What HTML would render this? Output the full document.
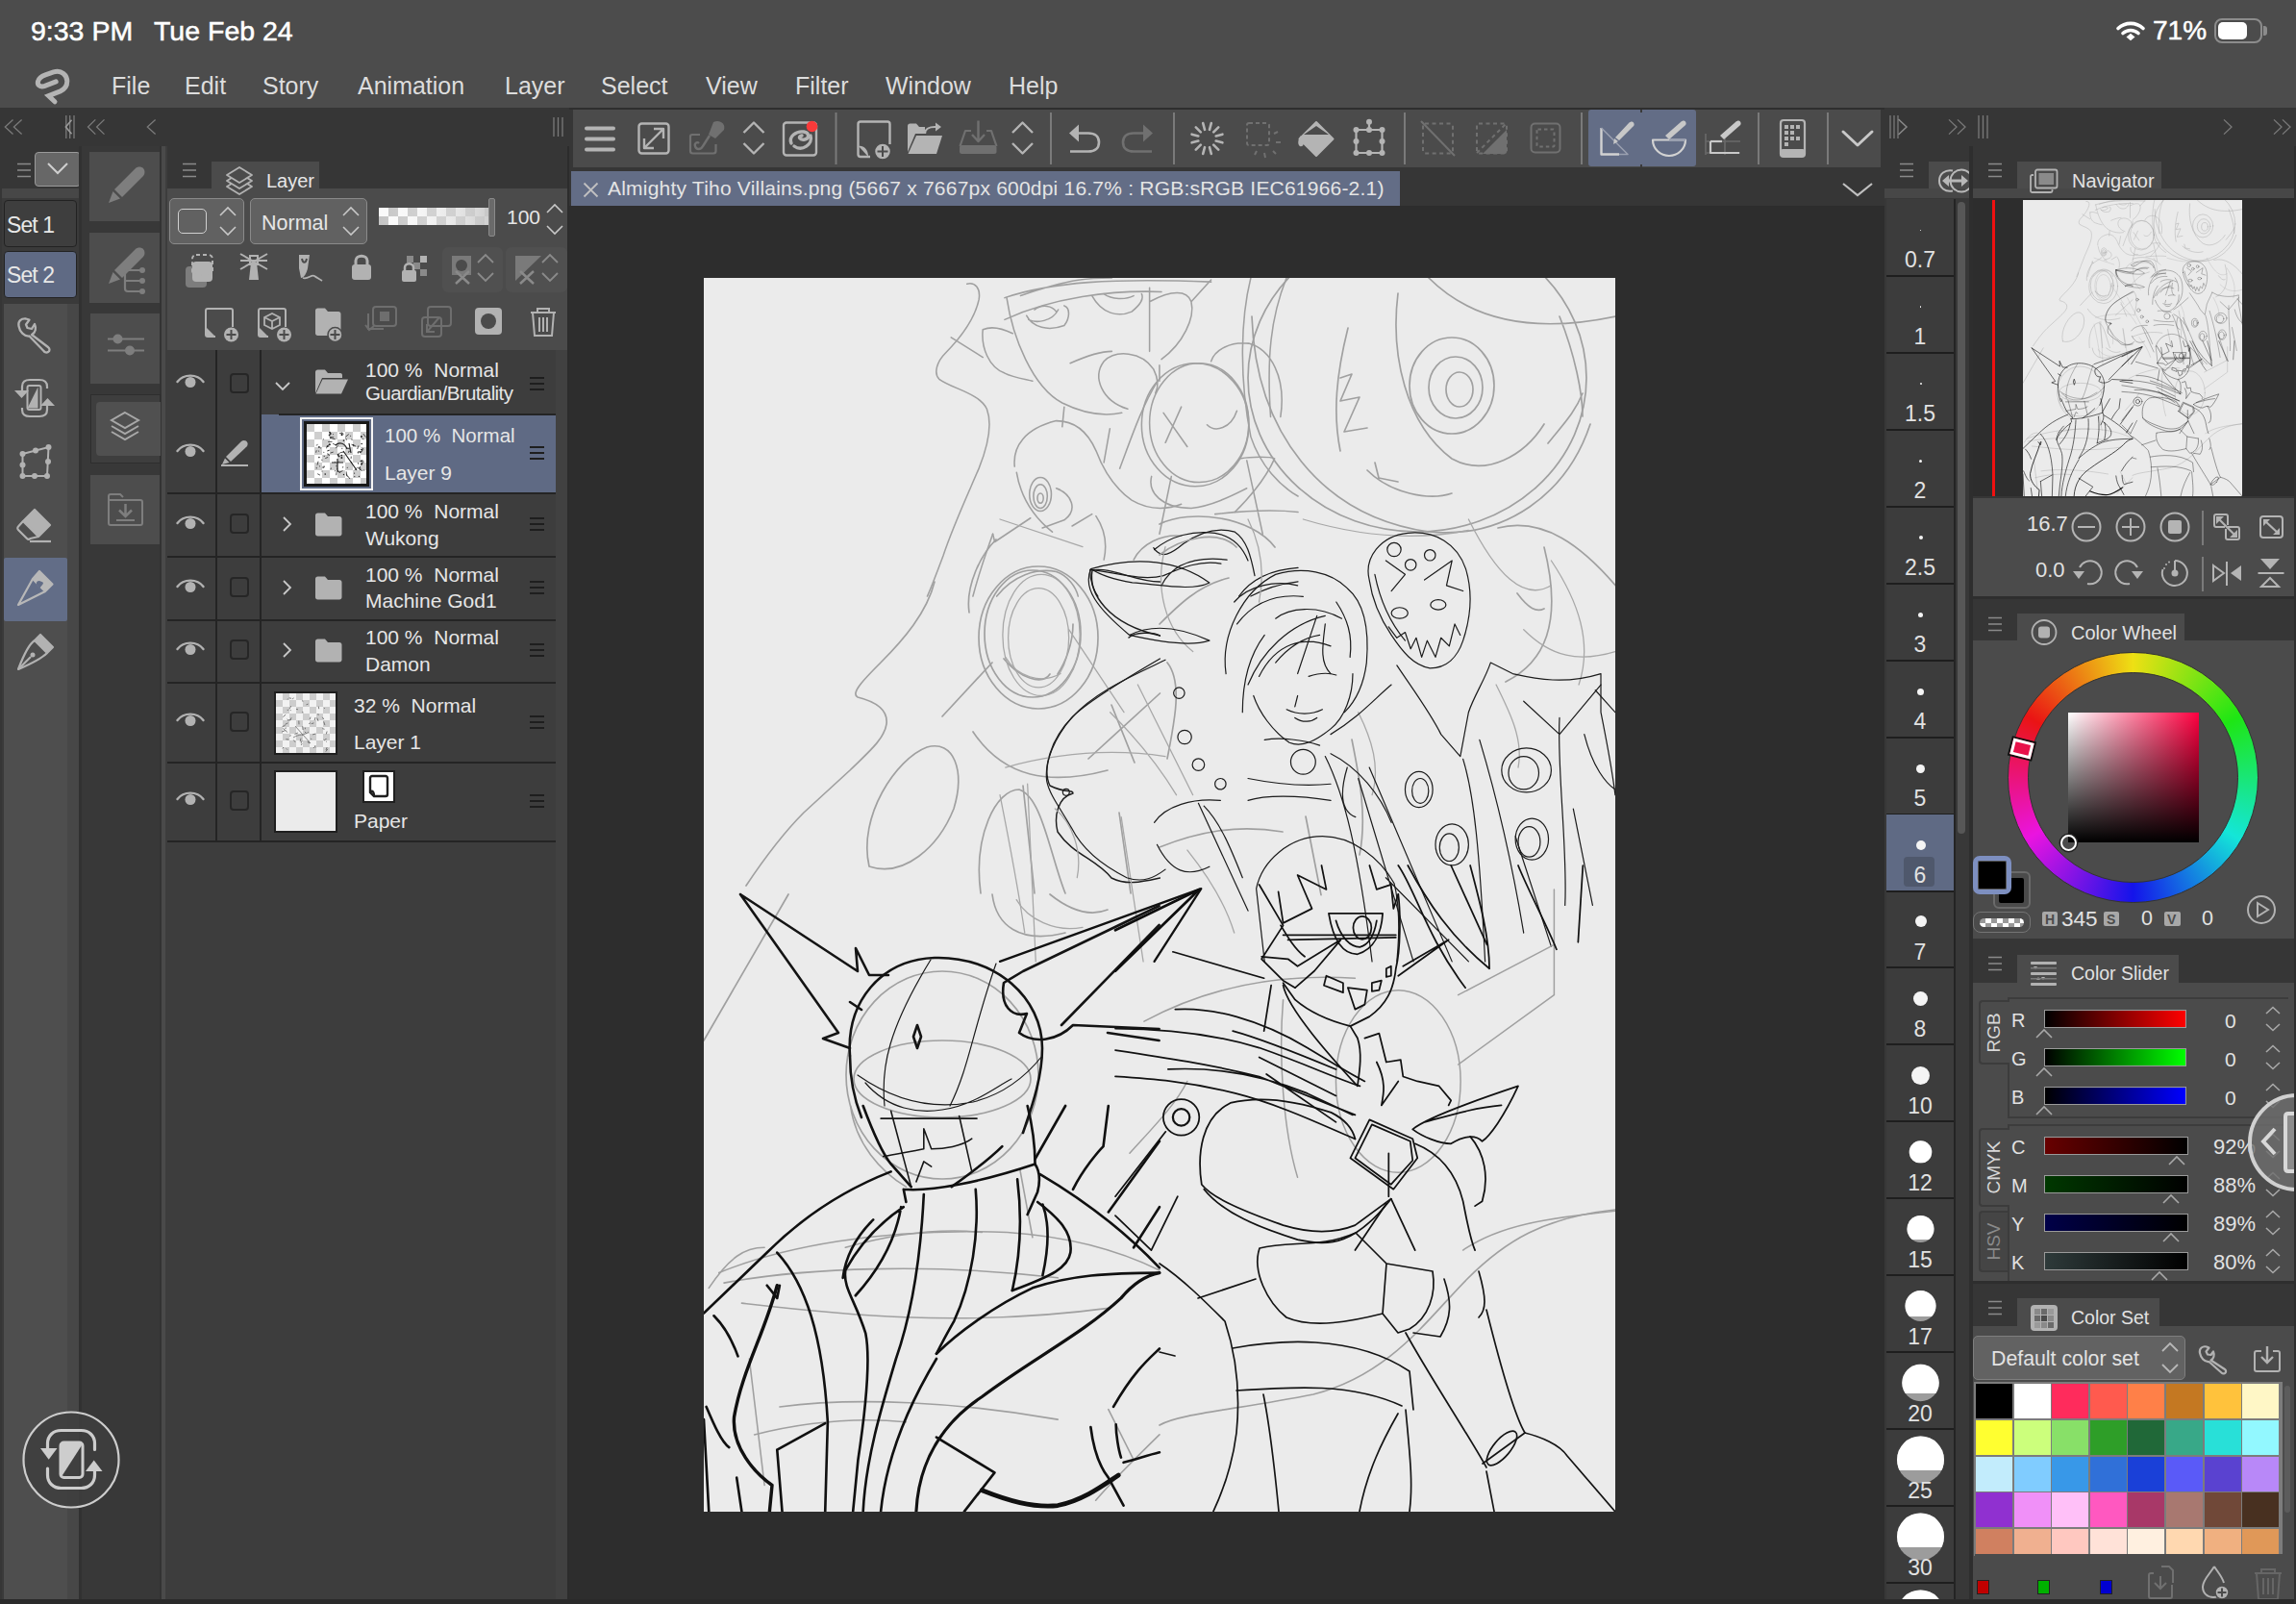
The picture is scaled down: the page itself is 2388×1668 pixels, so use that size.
<!DOCTYPE html>
<html><head><meta charset="utf-8">
<style>
*{box-sizing:border-box;margin:0;padding:0}
html,body{width:2388px;height:1668px;overflow:hidden;background:#4b4b4b;font-family:"Liberation Sans",sans-serif;color:#e6e6e6}
.a{position:absolute}
.t{position:absolute;white-space:nowrap;line-height:1}
svg{position:absolute;overflow:visible}
</style></head><body>
<div class="a" style="left:0;top:0;width:2388px;height:1668px">

<!-- status bar + menu -->
<div class="a" style="left:0;top:0;width:2388px;height:112px;background:#4c4c4c"></div>
<div class="t" style="left:32px;top:18px;font-size:28.5px;color:#fff;-webkit-text-stroke:0.5px #fff">9:33 PM</div>
<div class="t" style="left:160px;top:18px;font-size:28.5px;color:#fff;-webkit-text-stroke:0.5px #fff">Tue Feb 24</div>
<svg class="a" style="left:2200px;top:20px" width="32" height="24" viewBox="0 0 32 24">
<path d="M3,9.5 A19,19 0 0 1 29,9.5" fill="none" stroke="#fff" stroke-width="3.6" stroke-linecap="round"/>
<path d="M8,14.5 A12,12 0 0 1 24,14.5" fill="none" stroke="#fff" stroke-width="3.6" stroke-linecap="round"/>
<path d="M11.5,18.5 L16,14.8 L20.5,18.5 L16,22.3 Z" fill="#fff"/>
</svg>
<div class="t" style="left:2239px;top:18px;font-size:28px;color:#fff;-webkit-text-stroke:0.5px #fff">71%</div>
<div class="a" style="left:2303px;top:19px;width:50px;height:26px;border:2.5px solid #8c8c8c;border-radius:8px"></div>
<div class="a" style="left:2307px;top:23px;width:30px;height:18px;background:#fff;border-radius:5px"></div>
<div class="a" style="left:2354px;top:27px;width:4px;height:10px;background:#8c8c8c;border-radius:0 3px 3px 0"></div>

<svg class="a" style="left:0;top:0" width="100" height="112">
<path transform="translate(1.2,2.6)" d="M57,82.3 L45.5,86.8 C40.5,88.6 37.3,85.8 38.3,82 C39.2,78.8 42,76.8 46,75.3 L54.5,72.3 C63,69.8 68.6,75.6 68.6,82 C68.6,87 66,90.3 61.5,92.3 L49.3,97 L55.8,103.2" fill="none" stroke="#b4b4b4" stroke-width="5" stroke-linecap="round" stroke-linejoin="miter"/>
</svg>
<div class="t" style="left:116px;top:77px;font-size:25px;color:#ddd">File</div>
<div class="t" style="left:192px;top:77px;font-size:25px;color:#ddd">Edit</div>
<div class="t" style="left:273px;top:77px;font-size:25px;color:#ddd">Story</div>
<div class="t" style="left:372px;top:77px;font-size:25px;color:#ddd">Animation</div>
<div class="t" style="left:525px;top:77px;font-size:25px;color:#ddd">Layer</div>
<div class="t" style="left:625px;top:77px;font-size:25px;color:#ddd">Select</div>
<div class="t" style="left:734px;top:77px;font-size:25px;color:#ddd">View</div>
<div class="t" style="left:827px;top:77px;font-size:25px;color:#ddd">Filter</div>
<div class="t" style="left:921px;top:77px;font-size:25px;color:#ddd">Window</div>
<div class="t" style="left:1049px;top:77px;font-size:25px;color:#ddd">Help</div>

<!-- dark strip -->
<div class="a" style="left:0;top:112px;width:2388px;height:1556px;background:#363636"></div>

<!-- left tools column -->
<svg class="a" style="left:0;top:112px" width="600" height="40" viewBox="0 0 600 40" fill="none" stroke="#7a7a7a" stroke-width="1.3">
<path d="M13.5,12.4 L5.3,20 L13.5,27.6 M22.6,12.4 L14.4,20 L22.6,27.6"/>
<path d="M68.8,8 V32 M72.7,8 V32 M77,8 V32"/>
<path d="M74.5,12.8 L68.4,20 L74.5,27.2" stroke="#9a9a9a" stroke-width="1.6"/>
<path d="M99.3,12.4 L91.5,20 L99.3,27.6 M108.5,12.4 L100.6,20 L108.5,27.6"/>
<path d="M161.6,12.4 L153.3,20 L161.6,27.6"/>
<path d="M576,10 V30 M580.5,10 V30 M585,10 V30"/>
</svg>
<div class="a" style="left:2px;top:152px;width:83px;height:1511px;background:#3a3a3a"></div>
<div class="a" style="left:2px;top:152px;width:83px;height:44px;background:#363636"></div>
<div class="a" style="left:2px;top:196px;width:83px;height:10px;background:#474747"></div>
<svg class="a" style="left:16px;top:168px" width="18" height="18" viewBox="0 0 18 18" stroke="#8a8a8a" stroke-width="1.5"><path d="M2,2.5 H16 M2,9 H16 M2,15.5 H16"/></svg>
<div class="a" style="left:36px;top:158px;width:48px;height:36px;background:#676767;border:1.5px solid #9a9a9a;border-radius:4px"></div>
<svg class="a" style="left:48px;top:168px" width="24" height="16" viewBox="0 0 24 16" fill="none" stroke="#cfcfcf" stroke-width="2"><path d="M2,2 L12,12 L22,2"/></svg>
<div class="a" style="left:4px;top:208px;width:76px;height:49px;background:#3e3e3e;border:1px solid #222;border-radius:4px"></div>
<div class="t" style="left:7px;top:223px;font-size:23px;color:#e8e8e8;letter-spacing:-0.9px">Set 1</div>
<div class="a" style="left:4px;top:261px;width:76px;height:49px;background:#5f6a84;border:1px solid #222;border-radius:4px"></div>
<div class="t" style="left:7px;top:275px;font-size:23px;color:#e8e8e8;letter-spacing:-0.9px">Set 2</div>

<div class="a" style="left:4px;top:316px;width:66px;height:1347px;background:#4e4e4e"></div>
<div class="a" style="left:70px;top:316px;width:12px;height:1347px;background:#474747"></div>
<div class="a" style="left:4px;top:580px;width:66px;height:66px;background:#626d87;border-radius:2px"></div>

<!-- wrench -->
<svg class="a" style="left:17px;top:330px" width="38" height="38" viewBox="0 0 38 38" fill="none" stroke="#b2b2b2" stroke-width="2.3" stroke-linejoin="round">
<path d="M2.5,9 C1.5,4 5,1 10,1.5 L13.5,2.5 L10,7.5 L11.5,11 L16,12 L19,7 C21,11 20,16 16,18 L33,31 C35,32.5 35,35 33,36 C31.5,37 29.5,36.5 28.5,35 L13.5,19.5 C8,20 3.5,15 2.5,9 Z"/>
</svg>
<!-- rotate -->
<svg class="a" style="left:14px;top:393px" width="44" height="42" viewBox="0 0 44 42" fill="none" stroke="#b2b2b2" stroke-width="2.2">
<path d="M9,14 V9 C9,4 12,2 17,2 H27 C32,2 35,4 35,9 V11"/>
<path d="M35,28 V33 C35,38 32,40 27,40 H17 C12,40 9,38 9,33 V31"/>
<path d="M1,13 H16 L8.5,21 Z" fill="#b2b2b2" stroke="none"/>
<path d="M28,29 H43 L35.5,21 Z" fill="#b2b2b2" stroke="none"/>
<rect x="14.5" y="8" width="14" height="25" rx="2" stroke-width="2"/>
<path d="M16,31.5 L27,9.5 V31.5 Z" fill="#b2b2b2" stroke="none" transform="translate(-1.5,0) scale(1)"/>
</svg>
<!-- transform -->
<svg class="a" style="left:19px;top:461px" width="36" height="38" viewBox="0 0 36 38" fill="#b2b2b2" stroke="#b2b2b2" stroke-width="2">
<path d="M4.5,11 L31.5,4 L30,34 L4.5,34 Z" fill="none"/>
<circle cx="4.5" cy="11" r="3" stroke="none"/><circle cx="18" cy="7.5" r="3" stroke="none"/><circle cx="31.5" cy="4" r="3" stroke="none"/>
<circle cx="4.5" cy="22.5" r="3" stroke="none"/><circle cx="31" cy="19" r="3" stroke="none"/>
<circle cx="4.5" cy="34" r="3" stroke="none"/><circle cx="17" cy="34" r="3" stroke="none"/><circle cx="30" cy="34" r="3" stroke="none"/>
</svg>
<!-- eraser -->
<svg class="a" style="left:17px;top:528px" width="38" height="38" viewBox="0 0 38 38" stroke="#b2b2b2" stroke-width="2.2" stroke-linejoin="round">
<path d="M19,2 L35,18 L23,30 L7,14 Z" fill="#b2b2b2"/>
<path d="M7,14 L2,19.5 C1,20.5 1,22 2,23 L11,32 C12,33 13.5,33 14.5,32 L23,30" fill="none"/>
<path d="M14,35 H36" fill="none"/>
</svg>
<!-- pen selected -->
<svg class="a" style="left:17px;top:592px" width="40" height="40" viewBox="0 0 40 40" stroke="#b8b8b8" stroke-width="2.2" stroke-linejoin="round">
<path d="M24,2 L37.5,15.5 L30,23 L17,10 Z" fill="#b8b8b8"/>
<path d="M17,10 L2,37 L30,23" fill="none"/>
<path d="M23.5,12 C21,12 20,15 22,17 L24.5,19.5 C26,17 28,15.5 28,14 C27,12.5 25,12.5 23.5,12 Z" fill="#626d87" stroke="none"/>
</svg>
<!-- pen2 -->
<svg class="a" style="left:17px;top:658px" width="40" height="40" viewBox="0 0 40 40" stroke="#b2b2b2" stroke-width="2.2" stroke-linejoin="round">
<path d="M25,2 L38,15 L32,21 L19,8 Z" fill="#b2b2b2"/>
<path d="M19,8 C13,12 8,22 2,38 C16,32 26,27 32,21" fill="none"/>
<path d="M2,38 L15,25" fill="none"/>
<circle cx="17" cy="23" r="2.5" fill="#b2b2b2" stroke="none"/>
</svg>

<!-- sub tool column -->
<div class="a" style="left:82px;top:152px;width:90px;height:1511px;background:#383838"></div>
<div class="a" style="left:82px;top:152px;width:3px;height:1511px;background:#313131"></div>
<div class="a" style="left:166px;top:152px;width:2px;height:1511px;background:#333"></div>
<div class="a" style="left:168px;top:152px;width:4px;height:1511px;background:#4a4a4a"></div>
<div class="a" style="left:93px;top:158px;width:73px;height:72px;background:#4d4d4d"></div>
<div class="a" style="left:93px;top:242px;width:73px;height:73px;background:#4d4d4d"></div>
<div class="a" style="left:94px;top:326px;width:72px;height:73px;background:#4d4d4d"></div>
<div class="a" style="left:94px;top:410px;width:73px;height:72px;background:#3e3e3e;border:1px solid #2e2e2e"></div>
<div class="a" style="left:100px;top:418px;width:67px;height:56px;background:#505050;border-radius:4px 0 0 4px"></div>
<div class="a" style="left:94px;top:494px;width:72px;height:72px;background:#4d4d4d"></div>
<svg class="a" style="left:110px;top:172px" width="42" height="42" viewBox="0 0 42 42" fill="#7e7e7e">
<path d="M31,3 C33,1 37,1 39,3 C41,5 41,9 39,11 L17,33 L9,25 Z"/>
<path d="M7.5,27 L15,34.5 L3,39 Z"/>
</svg>
<svg class="a" style="left:110px;top:256px" width="44" height="50" viewBox="0 0 44 50" fill="#7e7e7e">
<path d="M31,3 C33,1 37,1 39,3 C41,5 41,9 39,11 L17,33 L9,25 Z"/>
<path d="M7.5,27 L15,34.5 L3,39 Z"/>
<path d="M37,25 H24 C21,25 20,27 20,29 V44 C20,46 21,47 23,47 H37 M21,36 H37" fill="none" stroke="#7e7e7e" stroke-width="2.2"/>
<circle cx="38" cy="25" r="3"/><circle cx="38" cy="36" r="3"/><circle cx="38" cy="47" r="3"/>
</svg>
<svg class="a" style="left:110px;top:346px" width="42" height="32" viewBox="0 0 42 32" stroke="#7e7e7e" stroke-width="2.2" fill="#7e7e7e">
<path d="M2,6.5 H40 M2,18.5 H40"/>
<circle cx="12.5" cy="6.5" r="5" stroke="none"/><circle cx="25" cy="18.5" r="5" stroke="none"/>
</svg>
<svg class="a" style="left:113px;top:427px" width="34" height="38" viewBox="0 0 34 38" fill="none" stroke="#a8a8a8" stroke-width="2">
<path d="M17,2 L31,10 L17,18 L3,10 Z"/>
<path d="M3,16 L17,24 L31,16"/>
<path d="M3,22 L17,30 L31,22"/>
</svg>
<svg class="a" style="left:111px;top:512px" width="40" height="36" viewBox="0 0 40 36" fill="none" stroke="#7e7e7e" stroke-width="2">
<path d="M2,8 V32 C2,33 3,34 4,34 H35 C36,34 37,33 37,32 V10 C37,9 36,8 35,8 H2 V4 C2,3 3,2 4,2 H14 L17,5"/>
<path d="M19.5,12 V24 M13,18.5 L19.5,25 L26,18.5" stroke-width="2.5"/>
<path d="M10,29 H29"/>
</svg>

<!-- layer panel -->
<div class="a" style="left:172px;top:152px;width:420px;height:1511px;background:#3d3d3d"></div>
<div class="a" style="left:174px;top:152px;width:418px;height:44px;background:#363636"></div>
<div class="a" style="left:174px;top:196px;width:418px;height:168px;background:#4b4b4b"></div>
<div class="a" style="left:220px;top:168px;width:112px;height:28px;background:#4b4b4b"></div>
<svg class="a" style="left:189px;top:169px" width="16" height="16" viewBox="0 0 16 16" stroke="#8a8a8a" stroke-width="1.5"><path d="M1,1.5 H15 M1,8 H15 M1,14.5 H15"/></svg>
<svg class="a" style="left:234px;top:172px" width="30" height="34" viewBox="0 0 30 34" fill="#4b4b4b" stroke="#b2b2b2" stroke-width="1.8" stroke-linejoin="round">
<path d="M2,22 L15,30 L28,22 L15,14 Z"/><path d="M2,16 L15,24 L28,16 L15,8 Z"/><path d="M2,10 L15,18 L28,10 L15,2 Z"/>
</svg>
<div class="t" style="left:277px;top:178px;font-size:20px;color:#e6e6e6">Layer</div>

<div class="a" style="left:176px;top:206px;width:78px;height:48px;background:#616161;border:1px solid #8a8a8a;border-radius:5px"></div>
<div class="a" style="left:185px;top:217px;width:30px;height:26px;border:1.8px solid #cfcfcf;border-radius:5px"></div>
<svg class="a" style="left:227px;top:214px" width="20" height="32" viewBox="0 0 20 32" fill="none" stroke="#c8c8c8" stroke-width="1.6"><path d="M2,10 L10,2 L18,10 M2,22 L10,30 L18,22"/></svg>
<div class="a" style="left:260px;top:206px;width:122px;height:48px;background:#616161;border:1px solid #8a8a8a;border-radius:5px"></div>
<div class="t" style="left:272px;top:222px;font-size:21.5px;color:#e6e6e6">Normal</div>
<svg class="a" style="left:355px;top:214px" width="20" height="32" viewBox="0 0 20 32" fill="none" stroke="#c8c8c8" stroke-width="1.6"><path d="M2,10 L10,2 L18,10 M2,22 L10,30 L18,22"/></svg>
<svg class="a" style="left:394px;top:216px" width="114" height="18" viewBox="0 0 114 18">
<defs><linearGradient id="og" x1="0" x2="1"><stop offset="0" stop-color="#fff" stop-opacity="0"/><stop offset="1" stop-color="#c8c8c8" stop-opacity="0.85"/></linearGradient>
<pattern id="chk" width="20" height="18" patternUnits="userSpaceOnUse"><rect width="20" height="18" fill="#c4c4c4"/><rect width="10" height="9" fill="#fafafa"/><rect x="10" y="9" width="10" height="9" fill="#fafafa"/></pattern></defs>
<rect width="114" height="18" fill="url(#chk)"/><rect width="114" height="18" fill="url(#og)"/>
</svg>
<div class="a" style="left:508px;top:206px;width:7px;height:40px;background:#6a6a6a;border:1px solid #8a8a8a;border-radius:2px"></div>
<div class="t" style="left:527px;top:215px;font-size:21px;color:#e6e6e6">100</div>
<svg class="a" style="left:567px;top:211px" width="20" height="34" viewBox="0 0 20 34" fill="none" stroke="#c8c8c8" stroke-width="1.6"><path d="M2,10 L10,2 L18,10 M2,24 L10,32 L18,24"/></svg>

<div class="a" style="left:460px;top:257px;width:63px;height:47px;background:#505050;border-radius:6px"></div>
<div class="a" style="left:526px;top:257px;width:64px;height:47px;background:#505050;border-radius:6px"></div>
<svg class="a" style="left:170px;top:250px" width="430" height="120" viewBox="0 0 430 120" fill="#b2b2b2" stroke="none">
<g transform="translate(0,9)"><!-- row1 -->
<rect x="23" y="18" width="22" height="22" rx="4" fill="#7d7d7d"/>
<rect x="30" y="13" width="21" height="21" rx="4" fill="#b2b2b2"/>
<rect x="30" y="6" width="21" height="21" rx="4" fill="none" stroke="#b2b2b2" stroke-width="2" stroke-dasharray="4,3"/>
<path d="M80,12 L108,12 M80,21 L108,5 M80,5 L108,21" stroke="#b2b2b2" stroke-width="2" transform="translate(0,0)"/>
<path d="M89,32 L91,14 H97 L99,32 Z"/><rect x="90" y="7" width="8" height="9" fill="none" stroke="#b2b2b2" stroke-width="2"/>
<path d="M141,6 H152 L150,20 C149,25 146,30 143,30 L141,20 Z" fill="#b2b2b2"/><path d="M144,10 C145,15 148,15 149,10" fill="none" stroke="#4b4b4b" stroke-width="2"/>
<path d="M145,30 C150,32 154,26 157,28 C160,30 162,31 165,33" fill="none" stroke="#b2b2b2" stroke-width="1.8"/>
<rect x="196" y="16" width="20" height="16" rx="3"/><path d="M200,17 V12 C200,5.5 212,5.5 212,12 V17" fill="none" stroke="#b2b2b2" stroke-width="3"/>
<rect x="253" y="7" width="7" height="7" fill="#8a8a8a"/><rect x="267" y="7" width="7" height="7"/><rect x="260" y="14" width="7" height="7" fill="#8a8a8a"/><rect x="267" y="21" width="7" height="7" fill="#8a8a8a"/>
<rect x="248" y="22" width="15" height="12" rx="2"/><path d="M251,23 V19 C251,14 260,14 260,19 V23" fill="none" stroke="#b2b2b2" stroke-width="2.5"/>
<path d="M300,7 H320 V27 H300 Z" fill="#7a7a7a"/><circle cx="310" cy="17" r="6" fill="#4b4b4b"/><path d="M304,23 L318,36 M318,23 L304,36" stroke="#8a8a8a" stroke-width="2.5"/>
<path d="M327,14 L335,6 L343,14 M327,25 L335,33 L343,25" fill="none" stroke="#8a8a8a" stroke-width="1.8"/>
<path d="M366,7 H393 L366,33 Z" fill="#7a7a7a"/><path d="M371,23 L385,36 M385,23 L371,36" stroke="#8a8a8a" stroke-width="2.5"/>
<path d="M394,14 L402,6 L410,14 M394,25 L402,33 L410,25" fill="none" stroke="#8a8a8a" stroke-width="1.8"/>
</g>
<!-- row2 -->
<g transform="translate(8,0)"><path d="M46,100 H38 C36.5,100 36,99 36,98 V73 C36,71.5 36.5,71 38,71 H62 C63.5,71 64,71.5 64,73 V90" fill="none" stroke="#b2b2b2" stroke-width="2"/>
<path d="M37,100 L46,100 L37,91 Z" fill="#b2b2b2"/>
<circle cx="62.5" cy="98" r="7.5" fill="#b2b2b2"/><path d="M62.5,93 V103 M57.5,98 H67.5" stroke="#4b4b4b" stroke-width="2"/></g>
<g transform="translate(7,0)"><path d="M102,100 H94 C92.5,100 92,99 92,98 V73 C92,71.5 92.5,71 94,71 H118 C119.5,71 120,71.5 120,73 V90" fill="none" stroke="#b2b2b2" stroke-width="2"/>
<path d="M93,100 L102,100 L93,91 Z" fill="#b2b2b2"/>
<path d="M98,80 L106,76 L114,80 V88 L106,92 L98,88 Z M98,80 L106,84 L114,80 M106,84 V92" fill="none" stroke="#b2b2b2" stroke-width="1.8"/>
<circle cx="118.5" cy="98" r="7.5" fill="#b2b2b2"/><path d="M118.5,93 V103 M113.5,98 H123.5" stroke="#4b4b4b" stroke-width="2"/></g>
<g transform="translate(4,0)"><path d="M154,73 C154,71.5 155,70.5 156.5,70.5 H164 L167,74 H178 C179.5,74 180.5,75 180.5,76.5 V99 H156.5 C155,99 154,98 154,96.5 Z" fill="#b2b2b2"/>
<circle cx="174.5" cy="98" r="7.5" fill="#b2b2b2" stroke="#4b4b4b" stroke-width="1.5"/><path d="M174.5,93 V103 M169.5,98 H179.5" stroke="#4b4b4b" stroke-width="2"/></g>
<path d="M213,76 V92 H229 M210,88 L214,93 L219,89" fill="none" stroke="#6e6e6e" stroke-width="2"/>
<rect x="218" y="69" width="24" height="20" rx="3" fill="none" stroke="#6e6e6e" stroke-width="2"/><rect x="225" y="74" width="10" height="10" fill="#6e6e6e"/>
<rect x="269" y="80" width="20" height="20" rx="3" fill="none" stroke="#6e6e6e" stroke-width="2"/>
<rect x="275" y="69" width="24" height="20" rx="3" fill="none" stroke="#6e6e6e" stroke-width="2"/><path d="M287,80 L274,95 M274,87 V95 H282" fill="none" stroke="#6e6e6e" stroke-width="2"/>
<rect x="324" y="70" width="28" height="28" rx="4" fill="#b2b2b2"/><circle cx="338" cy="84" r="8" fill="#4b4b4b"/>
<path d="M382,75 H408 M389,75 V71 H401 V75 M384,75 L386,99 H404 L406,75 M391,80 V95 M395,80 V95 M399,80 V95" fill="none" stroke="#b2b2b2" stroke-width="2"/>
</svg>

<!-- layer list -->
<div class="a" style="left:174px;top:364px;width:404px;height:512px;background:#3d3d3d"></div>
<div class="a" style="left:272px;top:431px;width:306px;height:81px;background:#5f6a84"></div>
<div class="a" style="left:224px;top:364px;width:2px;height:512px;background:#242424"></div>
<div class="a" style="left:270px;top:364px;width:2px;height:512px;background:#242424"></div>
<div class="a" style="left:174px;top:512px;width:404px;height:2px;background:#242424"></div>
<div class="a" style="left:174px;top:578px;width:404px;height:2px;background:#242424"></div>
<div class="a" style="left:174px;top:644px;width:404px;height:2px;background:#242424"></div>
<div class="a" style="left:174px;top:709px;width:404px;height:2px;background:#242424"></div>
<div class="a" style="left:174px;top:792px;width:404px;height:2px;background:#242424"></div>
<div class="a" style="left:174px;top:874px;width:404px;height:2px;background:#242424"></div>
<div class="a" style="left:290px;top:430px;width:288px;height:2px;background:#242424"></div>
<div class="a" style="left:578px;top:364px;width:14px;height:1299px;background:#414141"></div>
<div class="a" style="left:590px;top:152px;width:2px;height:1511px;background:#2c2c2c"></div>
<svg class="a" style="left:183px;top:388px" width="30" height="18" viewBox="0 0 30 18"><path d="M1.5,9 C8,0.5 22,0.5 28.5,9" fill="none" stroke="#b2b2b2" stroke-width="2.4" stroke-linecap="round"/><circle cx="15" cy="9.5" r="5.5" fill="#b2b2b2"/></svg><div class="a" style="left:239px;top:388px;width:20px;height:21px;border:2px solid #262626;border-radius:4px"></div><svg class="a" style="left:551px;top:392px" width="15" height="14" viewBox="0 0 15 14" stroke="#1e1e1e" stroke-width="2"><path d="M0,1 H15 M0,7 H15 M0,13 H15"/></svg><svg class="a" style="left:286px;top:397px" width="16" height="10" viewBox="0 0 16 10" fill="none" stroke="#c8c8c8" stroke-width="1.8"><path d="M1,1 L8,8 L15,1"/></svg><svg class="a" style="left:327px;top:383px" width="36" height="28" viewBox="0 0 36 28"><path d="M1,4 C1,2.5 2,1.5 3.5,1.5 H11 L14,5 H27 C28.5,5 29,6 29,7.5 V10 H8 L1,26 Z" fill="#b2b2b2"/><path d="M8.5,11.5 H35 L28,26.5 H1.5 Z" fill="#b2b2b2"/></svg><div class="t" style="left:380px;top:374px;font-size:21px;color:#e6e6e6">100 %&nbsp;&nbsp;Normal</div><div class="t" style="left:380px;top:399px;font-size:20.5px;color:#e6e6e6;letter-spacing:-0.6px">Guardian/Brutality</div><svg class="a" style="left:183px;top:460px" width="30" height="18" viewBox="0 0 30 18"><path d="M1.5,9 C8,0.5 22,0.5 28.5,9" fill="none" stroke="#b2b2b2" stroke-width="2.4" stroke-linecap="round"/><circle cx="15" cy="9.5" r="5.5" fill="#b2b2b2"/></svg><svg class="a" style="left:229px;top:457px" width="32" height="28" viewBox="0 0 32 28"><path d="M22,2 C23.5,0.5 26,0.5 27.5,2 C29,3.5 29,6 27.5,7.5 L11,23 L6,18 Z" fill="#b2b2b2"/><path d="M5,19.5 L9.5,24 L2,26 Z" fill="#b2b2b2"/><path d="M1,27 H29" stroke="#b2b2b2" stroke-width="2"/></svg><div class="a" style="left:312px;top:434px;width:76px;height:76px;border:2px solid #f4f4f4"></div>
<div class="a" style="left:316px;top:438px;width:68px;height:68px;border:3px solid #181818;background-color:#fff;background-image:linear-gradient(45deg,#cecece 25%,transparent 25%,transparent 75%,#cecece 75%),linear-gradient(45deg,#cecece 25%,transparent 25%,transparent 75%,#cecece 75%);background-size:16px 16px;background-position:8px 0,16px 8px;overflow:hidden"><svg width="62" height="62" viewBox="0 0 62 62" style="position:absolute;left:0;top:0"><path d="M26.2,14.9 L29.7,15.8 M36.8,24.8 L36.8,26.1 M11.9,27.9 L13.1,28.3 M31.2,46.0 L32.4,47.0 M41.4,51.6 L42.4,54.7 M58.8,10.1 L61.5,13.6 M25.4,45.5 L25.0,47.2 M41.9,25.1 L45.1,25.8 M44.0,27.7 L43.4,29.8 M32.7,21.8 L30.2,25.2 M22.2,34.4 L19.3,35.6 M46.5,21.2 L51.1,23.0 M30.9,42.8 L31.0,44.4 M12.0,38.7 L11.0,42.7 M53.8,22.4 L52.7,26.0 M39.0,29.0 L34.7,29.7 M33.7,38.6 L33.0,39.6 M42.4,53.7 L45.0,57.0 M29.3,38.8 L29.4,39.8 M12.9,43.3 L14.0,44.4 M29.5,48.1 L29.8,49.4 M37.5,48.6 L33.6,50.4 M23.9,27.1 L21.6,28.0 M57.9,14.9 L59.2,16.1 M21.7,30.3 L23.9,32.8 M10.2,27.3 L9.7,29.7 M57.7,39.8 L56.6,42.6 M43.8,10.5 L40.3,13.4 M53.7,44.7 L54.5,47.1 M15.2,37.2 L16.4,37.4 M27.0,10.4 L27.9,10.9 M15.1,24.7 L14.1,25.2 M40.7,14.8 L41.6,16.6 M28.2,13.7 L23.8,13.8 M33.3,30.3 L34.6,30.7 M27.1,20.2 L30.9,22.3 M11.2,51.7 L13.9,53.1 M37.2,9.2 L34.1,9.5 M53.2,40.0 L54.0,41.9 M18.4,43.5 L15.9,45.5 M26.5,18.3 L22.2,18.5 M52.6,45.1 L49.7,48.2 M21.3,31.8 L23.7,32.0 M11.4,20.9 L10.2,22.5 M57.8,28.6 L53.1,28.8 M57.8,24.8 L59.2,26.0 M41.2,49.4 L41.5,53.8 M42.6,44.8 L42.0,46.0 M55.5,44.0 L55.8,48.0 M18.9,44.3 L17.0,45.7 M58.6,26.2 L56.0,26.6 M46.2,15.8 L47.6,16.5 M55.2,45.1 L53.9,45.9 M59.0,38.2 L58.7,40.6 M58.5,37.9 L55.5,38.5 M31.7,48.1 L35.1,50.7 M22.6,21.5 L22.1,23.4 M23.0,27.3 L21.5,27.7 M27.7,29.1 L24.5,30.1 M31.0,50.2 L30.7,53.2 M36.2,8.9 L38.5,10.4 M10.2,44.8 L10.3,46.4 M46.3,33.6 L46.1,35.9 M37.8,44.1 L37.5,45.5" stroke="#2a2a2a" stroke-width="1" fill="none" opacity="0.8"/><path d="M26,40 L38,40 M32,36 L32,50 M38,28 L52,48 M44,20 L46,30 M30,22 C34,18 40,20 42,26" stroke="#222" stroke-width="1.2" fill="none"/><g fill="#222"><circle cx="23.9" cy="21.3" r="1.0"/><circle cx="36.4" cy="35.0" r="1.0"/><circle cx="55.8" cy="29.3" r="0.9"/><circle cx="36.3" cy="32.6" r="0.9"/><circle cx="33.7" cy="33.6" r="0.8"/><circle cx="57.2" cy="41.6" r="1.0"/><circle cx="57.2" cy="20.5" r="0.8"/><circle cx="57.3" cy="48.3" r="0.6"/><circle cx="17.8" cy="29.2" r="0.5"/><circle cx="23.6" cy="11.5" r="0.9"/><circle cx="49.6" cy="51.1" r="0.6"/><circle cx="46.4" cy="39.7" r="0.6"/><circle cx="54.4" cy="54.4" r="0.6"/><circle cx="57.7" cy="27.1" r="0.8"/><circle cx="59.5" cy="48.0" r="0.6"/><circle cx="32.7" cy="32.7" r="0.7"/><circle cx="21.4" cy="23.3" r="0.9"/><circle cx="12.9" cy="34.6" r="0.8"/><circle cx="12.9" cy="23.9" r="0.9"/><circle cx="36.6" cy="11.1" r="1.1"/><circle cx="49.8" cy="54.6" r="0.6"/><circle cx="24.7" cy="9.9" r="1.0"/><circle cx="25.0" cy="14.2" r="0.8"/><circle cx="55.7" cy="47.3" r="0.7"/><circle cx="19.2" cy="52.1" r="0.8"/><circle cx="45.6" cy="12.3" r="0.5"/><circle cx="45.0" cy="28.4" r="0.5"/><circle cx="57.0" cy="38.5" r="1.0"/><circle cx="16.0" cy="49.1" r="0.5"/><circle cx="53.4" cy="29.8" r="0.7"/><circle cx="38.5" cy="52.5" r="0.7"/><circle cx="18.2" cy="33.3" r="0.6"/><circle cx="17.3" cy="15.7" r="0.5"/><circle cx="21.7" cy="23.0" r="0.7"/><circle cx="48.5" cy="21.9" r="0.8"/><circle cx="20.5" cy="24.7" r="0.5"/><circle cx="24.0" cy="8.7" r="0.9"/><circle cx="38.5" cy="17.1" r="0.8"/><circle cx="56.9" cy="13.1" r="1.0"/><circle cx="32.7" cy="31.8" r="1.0"/></g></svg></div><div class="t" style="left:400px;top:443px;font-size:20.5px;color:#e6e6e6">100 %&nbsp;&nbsp;Normal</div><div class="t" style="left:400px;top:481px;font-size:21px;color:#e6e6e6">Layer 9</div><svg class="a" style="left:551px;top:464px" width="15" height="14" viewBox="0 0 15 14" stroke="#1e1e1e" stroke-width="2"><path d="M0,1 H15 M0,7 H15 M0,13 H15"/></svg><svg class="a" style="left:183px;top:535px" width="30" height="18" viewBox="0 0 30 18"><path d="M1.5,9 C8,0.5 22,0.5 28.5,9" fill="none" stroke="#b2b2b2" stroke-width="2.4" stroke-linecap="round"/><circle cx="15" cy="9.5" r="5.5" fill="#b2b2b2"/></svg><div class="a" style="left:239px;top:534px;width:20px;height:21px;border:2px solid #262626;border-radius:4px"></div><svg class="a" style="left:551px;top:538px" width="15" height="14" viewBox="0 0 15 14" stroke="#1e1e1e" stroke-width="2"><path d="M0,1 H15 M0,7 H15 M0,13 H15"/></svg><svg class="a" style="left:293px;top:537px" width="11" height="16" viewBox="0 0 11 16" fill="none" stroke="#c8c8c8" stroke-width="1.8"><path d="M2,1 L9,8 L2,15"/></svg><svg class="a" style="left:327px;top:532px" width="30" height="27" viewBox="0 0 30 27"><path d="M1,4 C1,2.5 2,1.5 3.5,1.5 H11 L14,5 H26 C27.5,5 28.5,6 28.5,7.5 V23 C28.5,24.5 27.5,25.5 26,25.5 H3.5 C2,25.5 1,24.5 1,23 Z" fill="#b2b2b2"/></svg><div class="t" style="left:380px;top:521px;font-size:21px;color:#e6e6e6">100 %&nbsp;&nbsp;Normal</div><div class="t" style="left:380px;top:549px;font-size:21px;color:#e6e6e6">Wukong</div><svg class="a" style="left:183px;top:601px" width="30" height="18" viewBox="0 0 30 18"><path d="M1.5,9 C8,0.5 22,0.5 28.5,9" fill="none" stroke="#b2b2b2" stroke-width="2.4" stroke-linecap="round"/><circle cx="15" cy="9.5" r="5.5" fill="#b2b2b2"/></svg><div class="a" style="left:239px;top:600px;width:20px;height:21px;border:2px solid #262626;border-radius:4px"></div><svg class="a" style="left:551px;top:604px" width="15" height="14" viewBox="0 0 15 14" stroke="#1e1e1e" stroke-width="2"><path d="M0,1 H15 M0,7 H15 M0,13 H15"/></svg><svg class="a" style="left:293px;top:603px" width="11" height="16" viewBox="0 0 11 16" fill="none" stroke="#c8c8c8" stroke-width="1.8"><path d="M2,1 L9,8 L2,15"/></svg><svg class="a" style="left:327px;top:598px" width="30" height="27" viewBox="0 0 30 27"><path d="M1,4 C1,2.5 2,1.5 3.5,1.5 H11 L14,5 H26 C27.5,5 28.5,6 28.5,7.5 V23 C28.5,24.5 27.5,25.5 26,25.5 H3.5 C2,25.5 1,24.5 1,23 Z" fill="#b2b2b2"/></svg><div class="t" style="left:380px;top:587px;font-size:21px;color:#e6e6e6">100 %&nbsp;&nbsp;Normal</div><div class="t" style="left:380px;top:614px;font-size:21px;color:#e6e6e6">Machine God1</div><svg class="a" style="left:183px;top:666px" width="30" height="18" viewBox="0 0 30 18"><path d="M1.5,9 C8,0.5 22,0.5 28.5,9" fill="none" stroke="#b2b2b2" stroke-width="2.4" stroke-linecap="round"/><circle cx="15" cy="9.5" r="5.5" fill="#b2b2b2"/></svg><div class="a" style="left:239px;top:665px;width:20px;height:21px;border:2px solid #262626;border-radius:4px"></div><svg class="a" style="left:551px;top:669px" width="15" height="14" viewBox="0 0 15 14" stroke="#1e1e1e" stroke-width="2"><path d="M0,1 H15 M0,7 H15 M0,13 H15"/></svg><svg class="a" style="left:293px;top:668px" width="11" height="16" viewBox="0 0 11 16" fill="none" stroke="#c8c8c8" stroke-width="1.8"><path d="M2,1 L9,8 L2,15"/></svg><svg class="a" style="left:327px;top:663px" width="30" height="27" viewBox="0 0 30 27"><path d="M1,4 C1,2.5 2,1.5 3.5,1.5 H11 L14,5 H26 C27.5,5 28.5,6 28.5,7.5 V23 C28.5,24.5 27.5,25.5 26,25.5 H3.5 C2,25.5 1,24.5 1,23 Z" fill="#b2b2b2"/></svg><div class="t" style="left:380px;top:652px;font-size:21px;color:#e6e6e6">100 %&nbsp;&nbsp;Normal</div><div class="t" style="left:380px;top:680px;font-size:21px;color:#e6e6e6">Damon</div><svg class="a" style="left:183px;top:740px" width="30" height="18" viewBox="0 0 30 18"><path d="M1.5,9 C8,0.5 22,0.5 28.5,9" fill="none" stroke="#b2b2b2" stroke-width="2.4" stroke-linecap="round"/><circle cx="15" cy="9.5" r="5.5" fill="#b2b2b2"/></svg><div class="a" style="left:239px;top:740px;width:20px;height:21px;border:2px solid #262626;border-radius:4px"></div><svg class="a" style="left:551px;top:744px" width="15" height="14" viewBox="0 0 15 14" stroke="#1e1e1e" stroke-width="2"><path d="M0,1 H15 M0,7 H15 M0,13 H15"/></svg><div class="a" style="left:285px;top:719px;width:66px;height:66px;border:2px solid #1f1f1f;background-color:#f2f2f2;background-image:linear-gradient(45deg,#cdcdcd 25%,transparent 25%,transparent 75%,#cdcdcd 75%),linear-gradient(45deg,#cdcdcd 25%,transparent 25%,transparent 75%,#cdcdcd 75%);background-size:14px 14px;background-position:0 0,7px 7px"></div><svg class="a" style="left:287px;top:721px" width="62" height="62" viewBox="0 0 62 62" fill="none" stroke="#555" stroke-width="1" opacity="0.75"><path d="M27.7,34.2 L28.1,38.0 M30.4,35.7 L30.3,37.3 M36.2,46.8 L37.0,47.9 M10.4,47.7 L13.4,48.1 M53.1,56.1 L52.1,58.9 M13.6,4.8 L16.1,5.3 M15.1,17.1 L15.3,18.1 M27.1,49.5 L26.1,51.8 M30.0,39.8 L31.5,41.6 M53.9,57.8 L51.8,60.6 M21.1,16.4 L23.0,16.8 M42.8,25.6 L44.0,28.9 M52.0,49.8 L52.8,50.4 M49.7,29.4 L50.9,33.1 M9.5,38.0 L11.7,40.5 M10.2,22.0 L7.4,24.6 M11.7,17.3 L12.9,17.5 M44.3,13.6 L44.7,16.2 M15.2,43.5 L14.5,44.8 M11.6,26.7 L12.7,27.9 M52.6,47.4 L50.8,48.1 M16.1,25.3 L14.6,28.5 M10.8,57.4 L11.9,58.6 M43.1,21.8 L44.9,22.2 M10.3,35.5 L9.8,37.1 M23.8,28.5 L24.0,32.3 M33.6,50.8 L35.0,51.5 M49.6,48.2 L51.1,49.1 M41.5,54.8 L39.9,55.0 M48.3,36.6 L50.5,37.3 M7.9,56.0 L6.8,57.4 M18.3,48.5 L20.0,50.7 M14.4,42.9 L15.3,43.7 M32.8,50.0 L34.7,52.2 M50.0,15.0 L50.7,15.8 M27.4,7.3 L28.0,8.7 M33.5,11.1 L31.5,11.8 M53.1,39.5 L52.3,42.4 M12.7,5.9 L11.7,6.2 M39.6,56.0 L39.2,57.0 M29.1,43.4 L27.2,43.5 M9.6,33.5 L6.6,34.5 M41.4,42.0 L38.1,42.9 M22.9,41.0 L19.5,42.5 M26.0,46.7 L25.2,50.2 M36.0,24.6 L35.1,27.2 M9.8,38.5 L6.2,40.0 M41.0,25.0 L40.2,28.1 M27.1,49.3 L26.3,50.2 M7.4,36.5 L9.3,38.1 M39.5,30.9 L36.8,31.6 M18.3,4.6 L17.3,6.2 M15.7,13.2 L13.9,16.4 M27.2,52.2 L26.2,53.9 M15.5,27.3 L12.2,28.2 M48.3,24.8 L49.8,27.1 M12.5,30.8 L9.4,32.4 M40.1,55.3 L41.7,56.2 M27.6,18.9 L28.1,20.4 M36.0,30.7 L34.3,31.6"/><path d="M18,46 C24,42 30,44 34,40 M20,34 L36,52" stroke="#666"/></svg><div class="t" style="left:368px;top:723px;font-size:21px;color:#e6e6e6">32 %&nbsp;&nbsp;Normal</div><div class="t" style="left:368px;top:761px;font-size:21px;color:#e6e6e6">Layer 1</div><svg class="a" style="left:183px;top:822px" width="30" height="18" viewBox="0 0 30 18"><path d="M1.5,9 C8,0.5 22,0.5 28.5,9" fill="none" stroke="#b2b2b2" stroke-width="2.4" stroke-linecap="round"/><circle cx="15" cy="9.5" r="5.5" fill="#b2b2b2"/></svg><div class="a" style="left:239px;top:822px;width:20px;height:21px;border:2px solid #262626;border-radius:4px"></div><svg class="a" style="left:551px;top:826px" width="15" height="14" viewBox="0 0 15 14" stroke="#1e1e1e" stroke-width="2"><path d="M0,1 H15 M0,7 H15 M0,13 H15"/></svg><div class="a" style="left:285px;top:801px;width:66px;height:65px;border:2px solid #1f1f1f;background:#ebebeb"></div><div class="a" style="left:377px;top:801px;width:34px;height:34px;border:2px solid #1f1f1f;background:#fff"></div><svg class="a" style="left:383px;top:806px" width="22" height="24" viewBox="0 0 22 24" fill="none" stroke="#1f1f1f" stroke-width="2.4"><path d="M6,22 H18 C19,22 20,21 20,20 V3 C20,2 19,1 18,1 H4 C3,1 2,2 2,3 V18 Z" /><path d="M2,17 C5,16 6,18 6,22" /></svg><div class="t" style="left:368px;top:843px;font-size:21px;color:#e6e6e6">Paper</div>

<!-- canvas area -->
<div class="a" style="left:592px;top:174px;width:1368px;height:1494px;background:#2d2d2d"></div>
<div class="a" style="left:592px;top:112px;width:1368px;height:2px;background:#2e2e2e"></div>
<div class="a" style="left:596px;top:114px;width:1360px;height:60px;background:#4b4b4b"></div>
<div class="a" style="left:1652px;top:114px;width:112px;height:59px;background:#636d86;border-radius:3px"></div>
<div class="a" style="left:1706px;top:114px;width:2px;height:3px;background:#3a3a3a"></div>
<div class="a" style="left:1706px;top:171px;width:2px;height:3px;background:#3a3a3a"></div>
<svg class="a" style="left:594px;top:112px" width="1366" height="64" viewBox="594 112 1366 64" fill="none" stroke="#b4b4b4" stroke-width="2.2" stroke-linejoin="round">
<path d="M869.5,117 V171 M1093,117 V171 M1221,117 V171 M1461,117 V171 M1645,117 V171 M1829,117 V171 M1901,117 V171" stroke="#7a7a7a" stroke-width="2"/>
<!-- hamburger -->
<path d="M610,133.5 H638 M610,144.5 H638 M610,155.5 H638" stroke-width="4" stroke-linecap="round"/>
<!-- resize -->
<rect x="664.5" y="128.5" width="31" height="31" rx="3" stroke-width="2.4"/>
<path d="M670,154 L690,134 M680,134 H690 V144 M670,144 V154 H680" stroke-width="2.4"/>
<!-- paint link disabled -->
<path d="M728,140 H720 C719,140 718,141 718,142 V157 C718,158.5 719,159.5 720.5,159.5 H742 C743.5,159.5 744.5,158.5 744.5,157 V150" stroke="#707070" stroke-width="2.2"/>
<path d="M742,127 C748,124 755,128 753,135 L744,144 L737,140 Z" fill="#707070" stroke="none"/>
<path d="M738,141 L731,152 C729,156 724,156 723,152 C722,149 725,147 727,149" stroke="#707070" stroke-width="2.4"/>
<!-- updown -->
<path d="M773.5,138 L784,127.5 L794.5,138 M773.5,149 L784,159.5 L794.5,149" stroke-width="2.4"/>
<!-- cloud link -->
<rect x="815" y="127.5" width="34" height="34" rx="3" stroke-width="2.4"/>
<path d="M823,149 C820,142 828,136 836,137 C842,138 842,144 837,145 C832,146 829,142 834,141 M826,152 C834,158 846,150 843,141" stroke-width="3.4" stroke-linecap="round"/>
<circle cx="844.5" cy="131.5" r="5.8" fill="#fa3a3a" stroke="none"/>
<!-- new doc -->
<path d="M905,163 H895 C893.5,163 892.5,162 892.5,160.5 V129 C892.5,127.5 893.5,126.5 895,126.5 H923 C924.5,126.5 925.5,127.5 925.5,129 V150" stroke-width="2.4"/>
<path d="M893,152 C897,151 903,154 903,163 Z" fill="#b4b4b4" stroke="none"/>
<circle cx="918" cy="157.5" r="8.5" fill="#b4b4b4" stroke="#4b4b4b" stroke-width="1.5"/>
<path d="M918,152 V163 M912.5,157.5 H923.5" stroke="#4b4b4b" stroke-width="2"/>
<!-- open folder -->
<path d="M944,131 C944,129.5 945,128.5 946.5,128.5 H953 L956,132 H962 V139 H952 L944,158 Z" fill="#b4b4b4" stroke="none"/>
<path d="M953,141 H980 L974,160 H944.5 Z" fill="#b4b4b4" stroke="none"/>
<path d="M962,139 C962,134 967,132 972,132 H975" stroke-width="2.2"/>
<path d="M973,127.5 L979,132 L973,136.5 Z" fill="#b4b4b4" stroke="none"/>
<!-- save disabled -->
<path d="M998.5,152 L1004,136 H1010 M1026,136 H1031 L1036.5,152" stroke="#707070" stroke-width="2.2"/>
<rect x="998" y="151" width="38.5" height="9" rx="2.5" fill="#707070" stroke="none"/>
<path d="M1017.5,125.5 V146 M1011,140 L1017.5,147 L1024,140" stroke="#707070" stroke-width="2.4"/>
<!-- updown 2 -->
<path d="M1053,138 L1063.5,127.5 L1074,138 M1053,149 L1063.5,159.5 L1074,149" stroke-width="2.4"/>
<!-- undo -->
<path d="M1120,138.5 H1132 C1139,138.5 1143,142 1143,148 C1143,154 1139,157.5 1132,157.5 H1113" stroke-width="2.6"/>
<path d="M1112,138.5 L1122,129.5 V147.5 Z" fill="#b4b4b4" stroke="none"/>
<!-- redo disabled -->
<path d="M1191,138.5 H1179 C1172,138.5 1168,142 1168,148 C1168,154 1172,157.5 1179,157.5 H1198" stroke="#707070" stroke-width="2.6"/>
<path d="M1199,138.5 L1189,129.5 V147.5 Z" fill="#707070" stroke="none"/>
<!-- spinner -->
<g stroke-width="2.6" stroke-linecap="round" transform="translate(1255.5,144)"><path d="M2.5,-9.2 L4.3,-15.9 M6.7,-6.7 L11.7,-11.7 M9.2,-2.5 L15.9,-4.3 M9.2,2.5 L15.9,4.3 M6.7,6.7 L11.7,11.7 M2.5,9.2 L4.3,15.9 M-2.5,9.2 L-4.3,15.9 M-6.7,6.7 L-11.7,11.7 M-9.2,2.5 L-15.9,4.3 M-9.2,-2.5 L-15.9,-4.3 M-6.7,-6.7 L-11.7,-11.7 M-2.5,-9.2 L-4.3,-15.9"/></g>
<!-- select spinner disabled -->
<rect x="1297" y="128" width="23" height="23" rx="2" stroke="#707070" stroke-width="2" stroke-dasharray="4,3"/>
<g stroke="#707070" stroke-width="2" transform="translate(1312,144)"><path d="M15,4 H20 M12,13 L15,16 M3,15 L4,20 M-5,13 L-7,17 M13,-5 L17,-7"/></g>
<!-- fill -->
<path d="M1369,127 L1386.5,144.5 L1369,162 L1351.5,144.5 Z" fill="#b4b4b4" stroke="#b4b4b4" stroke-width="2" />
<path d="M1356,140 L1369,131 L1382,140 Z" fill="#4b4b4b" stroke="none"/>
<path d="M1353,141 C1349,146 1350,151 1352,152 C1355,153 1357,150 1356,144 Z" fill="#b4b4b4" stroke="none"/>
<!-- transform -->
<rect x="1410.5" y="135" width="27" height="24" stroke-width="2.2"/>
<path d="M1424,135 V127" stroke-width="2.2"/>
<g fill="#b4b4b4" stroke="none"><circle cx="1424" cy="126.7" r="3"/><circle cx="1410.5" cy="135" r="3"/><circle cx="1424" cy="135" r="3"/><circle cx="1437.5" cy="135" r="3"/><circle cx="1410.5" cy="147" r="3"/><circle cx="1437.5" cy="147" r="3"/><circle cx="1410.5" cy="159" r="3"/><circle cx="1424" cy="159" r="3"/><circle cx="1437.5" cy="159" r="3"/></g>
<!-- disabled 3 -->
<rect x="1480" y="128.5" width="31" height="31" rx="2" stroke="#707070" stroke-width="2" stroke-dasharray="4,3.5"/>
<path d="M1478,126 L1513,162" stroke="#707070" stroke-width="2"/>
<rect x="1536" y="128.5" width="31" height="31" rx="2" stroke="#707070" stroke-width="2" stroke-dasharray="4,3.5"/>
<path d="M1542,160 L1567,135 V158 C1567,159 1566,160 1565,160 Z" fill="#707070" stroke="none"/>
<path d="M1536,159 L1567,128" stroke="#707070" stroke-width="2" stroke-dasharray="4,3.5"/>
<rect x="1592.5" y="128.5" width="30" height="30" rx="4" stroke="#707070" stroke-width="2"/>
<rect x="1598.5" y="134.5" width="18" height="18" rx="1" stroke="#707070" stroke-width="2" stroke-dasharray="3.5,3"/>
<!-- rulers -->
<path d="M1665.5,133 V160.5 H1684" stroke="#d2d2d2" stroke-width="2.4"/>
<path d="M1665.5,133 L1693,160.5 H1684" stroke="#9aa0b0" stroke-width="1.5"/>
<path d="M1680,143 L1694,128 C1696,126 1698,126 1699,127.5 C1700,129 1700,130.5 1698,132 L1684,146 Z" fill="#c8c8c8" stroke="none"/>
<path d="M1679,144 L1683,147 L1678,150 Z" fill="#c8c8c8" stroke="none"/>
<path d="M1719,145.5 H1753 C1753,155 1745,162 1736,162 C1727,162 1719,155 1719,145.5 Z" stroke="#d2d2d2" stroke-width="2.2"/>
<path d="M1736,145.5 H1753" stroke="#9aa0b0" stroke-width="2.2"/>
<path d="M1732,141 L1748,127 C1750,125 1752,125 1753,126.5 C1754,128 1754,129.5 1752,131 L1736,145 Z" fill="#c8c8c8" stroke="none"/>
<path d="M1774,139 V161 M1794,139 V161" stroke="#6a6a6a" stroke-width="1.6"/>
<path d="M1774,147 H1810 M1774,159 H1810" stroke="#6a6a6a" stroke-width="1.6"/>
<path d="M1779,147 V159 H1809" stroke="#c8c8c8" stroke-width="2.2"/>
<path d="M1789,141 L1805,127 C1807,125 1809,125 1810,126.5 C1811,128 1811,129.5 1809,131 L1793,145 Z" fill="#c8c8c8" stroke="none"/>
<path d="M1779,147 H1791" stroke="#c8c8c8" stroke-width="2.2"/>
<!-- device -->
<rect x="1852" y="125" width="25" height="38" rx="3" stroke-width="2.2"/>
<rect x="1852" y="155" width="25" height="8" rx="2" fill="#b4b4b4" stroke="none"/>
<g fill="#b4b4b4" stroke="none"><rect x="1856" y="130" width="4" height="4"/><rect x="1862" y="130" width="4" height="4"/><rect x="1868" y="130" width="4" height="4"/><rect x="1856" y="136" width="4" height="4"/><rect x="1862" y="136" width="4" height="4"/><rect x="1856" y="142" width="4" height="4"/><rect x="1862" y="142" width="4" height="4"/><rect x="1868" y="142" width="4" height="4"/><rect x="1856" y="148" width="4" height="4"/></g>
<!-- chevron -->
<path d="M1917,137 L1932,151 L1947,137" stroke="#c8c8c8" stroke-width="3" stroke-linecap="round"/>
</svg>

<div class="a" style="left:592px;top:174px;width:1368px;height:40px;background:#363636"></div>
<div class="a" style="left:594px;top:178px;width:862px;height:36px;background:#636d86"></div>
<svg class="a" style="left:606px;top:189px" width="17" height="17" viewBox="0 0 17 17" stroke="#c0c0c0" stroke-width="1.8"><path d="M1.5,1.5 L15.5,15.5 M15.5,1.5 L1.5,15.5"/></svg>
<div class="t" style="left:632px;top:185px;font-size:21px;color:#e4e4e4;letter-spacing:0.21px">Almighty Tiho Villains.png (5667 x 7667px 600dpi 16.7% : RGB:sRGB IEC61966-2.1)</div>
<svg class="a" style="left:1916px;top:189px" width="32" height="16" viewBox="0 0 32 16" fill="none" stroke="#c0c0c0" stroke-width="2.2"><path d="M1,2 L16,14 L31,2"/></svg>

<div class="a" style="left:732px;top:289px;width:948px;height:1283px;background:#ebebeb"></div>
<!-- CANVAS-DRAWING -->
<svg class="a" style="left:0;top:0;width:0;height:0"><defs><symbol id="art" viewBox="0 0 948 1283">
<g fill="none" stroke-linecap="round" stroke-linejoin="round">
<!-- TL -->
<g transform="scale(0.4)">
<g stroke="#a0a0a0" stroke-width="4.2">
<path d="M600,790 C580,870 520,940 460,1000 C420,1040 380,1080 400,1090 C440,1100 480,1120 475,1160 C470,1200 420,1240 380,1280 L260,1390 C200,1450 150,1520 110,1580"/>
<ellipse cx="855" cy="925" rx="125" ry="165"/><ellipse cx="870" cy="935" rx="155" ry="185"/>
<path d="M780,990 C820,1040 880,1060 900,1030 M920,1030 C940,1000 960,950 960,900"/>
<path d="M430,1530 C400,1400 500,1250 580,1220 C650,1200 680,1280 650,1380 C610,1480 520,1560 430,1530"/>
<path d="M620,1140 L750,1000 M700,1180 C780,1300 900,1320 1050,1280 M690,870 C680,800 720,720 760,680"/>
<path d="M720,1600 C700,1450 760,1330 820,1330 C880,1350 900,1500 940,1600 M830,1320 L860,1600 M1080,1390 L1110,1600 M1000,1250 L1186,1080 M1060,1110 L1120,1260"/>
</g>
<g stroke="#1e1e1e" stroke-width="3.6">
<path d="M1010,760 C1000,820 1050,900 1186,930 M1010,760 C1060,750 1120,790 1186,790"/>
<path d="M1186,990 C1100,1040 1000,1100 960,1140 C900,1200 880,1280 900,1320 C940,1340 960,1330 960,1340 C920,1350 910,1400 920,1440 C960,1500 1020,1510 1060,1560 C1100,1580 1140,1570 1186,1560"/>
<path d="M1105,935 C1120,920 1170,920 1186,930"/>
</g>
</g>
<!-- TL2 -->
<g transform="translate(218,0) scale(0.2064)">
<g stroke="#a0a0a0" stroke-width="7.5">
<path d="M270,30 C310,20 340,50 330,110 C310,200 240,300 160,380 C120,420 100,480 130,510 C200,560 330,580 370,660 C400,740 370,860 330,960 C270,1100 200,1250 150,1400 C120,1480 90,1560 70,1604"/>
<path d="M460,100 C700,20 1000,0 1500,20 M460,210 C700,100 1000,60 1250,70 M540,90 C800,0 900,0 1000,0"/>
<path d="M470,100 C500,300 600,550 750,630 C850,680 950,700 1050,680 M350,260 C400,240 460,260 500,280 M350,260 C340,350 380,450 460,480 C500,500 560,510 600,520 M190,300 L350,400"/>
<path d="M570,190 C600,250 680,270 760,240 C790,200 790,150 760,140 M580,210 C620,230 700,220 730,160 M610,160 C650,130 700,140 720,170 M900,90 C950,180 1030,200 1100,170 C1150,130 1160,100 1150,80 M960,80 C1000,110 1070,110 1110,90"/>
<path d="M1190,120 C1300,60 1380,60 1400,120 C1420,200 1360,330 1250,410 M1190,50 L1190,370 M1400,120 L1500,10"/>
<path d="M1080,660 C950,620 900,500 960,420 C1020,360 1150,370 1210,460 C1240,520 1230,560 1220,580 M790,430 C880,390 960,370 1000,370"/>
<ellipse cx="1420" cy="740" rx="270" ry="310"/><ellipse cx="1440" cy="730" rx="250" ry="300"/>
<path d="M1260,680 L1380,850 M1350,650 L1270,830 M1480,740 C1520,780 1600,760 1630,670"/>
<path d="M1850,700 C1880,500 1800,360 1690,330 C1600,320 1520,360 1500,420 M1700,0 C1650,200 1640,500 1700,800 C1750,950 1850,1050 1938,1100 M1880,0 C1800,200 1780,400 1800,700"/>
<path d="M510,950 C500,850 560,760 720,720 C820,720 880,780 920,870 C950,950 1000,1050 1100,1120 C1200,1180 1300,1160 1350,1140 M520,980 C540,1100 600,1200 700,1280"/>
<ellipse cx="640" cy="1090" rx="55" ry="85"/><ellipse cx="640" cy="1100" rx="35" ry="60"/><ellipse cx="640" cy="1110" rx="15" ry="25"/>
<path d="M720,1060 C800,1090 830,1170 760,1220 L650,1260 M400,1290 L410,1330 L590,1210 M800,1250 L900,1190 M920,1200 C960,1260 980,1330 960,1420"/>
<path d="M1200,1000 C1180,1080 1250,1160 1400,1160 C1500,1150 1600,1100 1680,1060 M1650,910 C1700,900 1800,900 1820,910 C1780,1000 1700,1100 1620,1180"/>
<path d="M1240,440 L1240,520 M990,760 L960,930 M1300,1000 L1240,1290 M1680,920 L1760,1290 M1520,1190 C1700,1170 1850,1170 1938,1180 M1040,960 C1100,800 1150,650 1230,520 M760,650 L750,750"/>
<path d="M420,1604 C500,1500 620,1460 720,1480 C780,1500 820,1560 830,1604 M300,1604 C340,1450 380,1350 400,1290 M1110,1420 C1150,1340 1250,1290 1350,1300"/>
</g>
<g stroke="#1c1c1c" stroke-width="6">
<path d="M1210,1360 C1250,1420 1300,1390 1360,1340 C1430,1290 1520,1250 1620,1280 C1680,1320 1700,1400 1720,1500 M890,1470 C1000,1480 1150,1530 1260,1500 C1350,1460 1450,1420 1550,1440 M890,1470 C890,1530 910,1580 930,1604 M1250,1550 C1300,1450 1400,1400 1580,1420 M1640,1604 C1700,1520 1800,1470 1938,1460 M1700,1604 C1780,1560 1850,1540 1938,1530"/>
</g>
</g>
<!-- TR -->
<g transform="translate(474,0) scale(0.4)">
<g stroke="#a0a0a0" stroke-width="4.2">
<ellipse cx="670" cy="260" rx="440" ry="400"/><path d="M240,100 C250,400 420,620 700,660 C900,680 1060,560 1120,380"/>
<path d="M620,40 C600,200 640,380 760,470 C850,520 950,460 1000,380"/>
<ellipse cx="760" cy="280" rx="110" ry="125"/><ellipse cx="770" cy="285" rx="70" ry="80"/><ellipse cx="780" cy="290" rx="35" ry="45"/>
<path d="M490,130 C460,250 450,350 470,450 M470,260 L500,250 L470,320 L520,310 L480,400 L540,390 M540,500 C600,560 700,580 760,560 M560,480 L570,520 L620,530"/>

<path d="M700,0 C800,100 950,150 1186,100 M1010,430 C1050,380 1080,350 1100,300 M1040,100 C1080,200 1100,300 1100,360"/>
<path d="M0,720 C50,680 150,650 200,700 M0,900 C50,850 100,800 180,780 M0,640 C80,600 240,620 300,700 M880,650 C1000,620 1100,700 1186,800 M1000,700 C1050,900 1000,1000 900,1050 M930,820 C960,860 980,870 1000,860"/>
<path d="M20,1000 C60,1050 40,1150 20,1250 M0,1480 C100,1440 200,1420 320,1440 M380,1400 L420,1604 M500,1200 C520,1300 540,1400 520,1500"/>
</g>


</g>
<!-- MID -->
<g transform="translate(308,251) scale(0.2867)">
<g stroke="#a8a8a8" stroke-width="4.5">
<ellipse cx="150" cy="420" rx="140" ry="220"/><ellipse cx="140" cy="430" rx="110" ry="180"/>
<path d="M20,500 C60,570 150,600 220,560 M0,0 L300,100 M1100,0 C1300,60 1500,80 1700,40 M1700,0 C1800,200 1900,300 2000,240 M2000,150 C2100,300 2150,450 2100,600 M1900,400 C2000,500 2100,520 2232,480"/>
<path d="M20,900 C200,850 400,830 600,860 M100,960 L130,1604 M440,1080 L520,1604 M60,1380 C100,1450 200,1500 300,1480 M500,600 L700,1000 M400,700 C500,800 580,900 640,1000 M250,400 L450,700 M600,100 C560,250 600,400 700,480 M900,0 C950,100 960,200 940,300"/>
<path d="M0,1000 C30,1150 60,1300 90,1500 M200,1050 C260,1100 300,1200 280,1300 M680,1200 C760,1300 820,1400 850,1500 M1300,700 C1350,800 1380,900 1350,1000 M1800,600 C1850,700 1900,800 1880,900"/>
</g>
<g stroke="#1c1c1c" stroke-width="4.2">
<path d="M820,560 C800,420 880,260 1000,200 C1100,170 1200,190 1260,250 C1320,300 1340,400 1330,520 C1320,600 1290,660 1250,700"/>
<path d="M900,600 C950,480 1050,380 1180,350 M940,570 C1000,450 1100,420 1200,460 M860,380 C920,300 1000,270 1100,280 M1000,360 C1050,320 1150,310 1240,360 M880,700 C880,600 900,500 960,420 M1000,520 C1050,460 1100,430 1160,420 M1150,350 L1080,560 M1180,380 C1170,460 1160,520 1200,560 M850,300 C900,240 1000,220 1080,240 M1220,300 C1260,360 1280,420 1270,500"/>
<path d="M920,640 C940,700 990,770 1050,810 C1100,830 1150,800 1200,760 C1250,720 1280,640 1280,560"/>
<path d="M1120,570 C1150,560 1190,555 1220,565 M1080,640 L1070,680 M1040,690 C1080,710 1130,710 1170,690 M1070,720 C1100,740 1130,735 1150,720"/>
<path d="M330,180 C500,130 650,150 760,230 C700,260 600,240 480,230 C420,220 360,200 330,180 M560,110 C620,60 700,40 780,50 C840,60 880,100 900,150 M470,420 C550,380 650,390 760,440 C700,460 600,450 470,420 M330,180 C300,250 350,320 470,420"/>
<path d="M600,510 C500,560 350,620 260,720 C200,790 160,880 170,950 C180,1000 220,1050 260,1120 C300,1200 380,1260 460,1300 C520,1320 560,1300 600,1270"/>
<circle cx="670" cy="790" r="25"/><circle cx="720" cy="890" r="22"/><circle cx="800" cy="960" r="20"/><circle cx="650" cy="630" r="20"/><circle cx="240" cy="990" r="12"/>
<path d="M960,800 C1020,790 1100,800 1160,820 M900,940 C1000,960 1100,970 1200,960"/><circle cx="1100" cy="880" r="45"/>
<path d="M560,1100 C600,1040 700,1010 800,1020 M740,1040 C800,1100 840,1200 880,1300 M900,1020 C960,1000 1080,1000 1200,1020 M570,1180 C620,1280 680,1300 760,1260 M720,1030 L900,1420"/>
<path d="M1340,220 C1320,140 1380,60 1480,50 C1580,40 1660,90 1690,180 C1720,280 1700,380 1680,440 C1660,500 1620,540 1560,540 C1500,530 1460,480 1420,420 C1380,360 1350,290 1340,220 Z"/>
<path d="M1360,200 C1380,300 1420,380 1470,440 M1400,150 L1470,200 L1420,260 M1540,220 L1640,150 L1620,240 L1680,260"/>
<ellipse cx="1450" cy="340" rx="30" ry="20"/><ellipse cx="1590" cy="310" rx="28" ry="18"/><circle cx="1430" cy="110" r="25"/><circle cx="1490" cy="165" r="20"/><circle cx="1560" cy="130" r="20"/>
<path d="M1410,390 L1440,430 L1470,410 L1490,470 L1510,430 L1530,500 L1550,440 L1580,500 L1600,430 L1630,460 L1650,380 L1670,420"/>
<path d="M1440,530 C1500,620 1560,700 1600,780 L1670,860 L1700,700 C1720,640 1760,580 1780,520 M1420,600 C1360,650 1300,720 1200,780 M1780,520 L1860,560 C1950,580 2050,600 2180,560 L2180,700 C2200,800 2220,900 2232,1000"/>
<path d="M1680,870 C1720,1000 1740,1200 1760,1604 M1740,800 C1800,1000 1850,1200 1900,1500 M2030,720 C2020,900 2060,1200 2050,1400 M1900,660 L2030,780 L2180,600 M2160,620 L2232,700"/>
<ellipse cx="1520" cy="980" rx="50" ry="65"/><ellipse cx="1525" cy="985" rx="30" ry="45"/><ellipse cx="1910" cy="910" rx="90" ry="80"/><ellipse cx="1900" cy="920" rx="55" ry="60"/><ellipse cx="1640" cy="1180" rx="60" ry="75"/><ellipse cx="1630" cy="1190" rx="35" ry="50"/><ellipse cx="1930" cy="1160" rx="60" ry="75"/><ellipse cx="1920" cy="1170" rx="40" ry="55"/>
<path d="M1300,940 L1500,1604 M1340,900 L1640,1604 M1180,860 C1250,1000 1300,1200 1350,1604 M1200,850 C1300,900 1380,1000 1420,1100 M1400,1300 L1700,1604 M1870,1150 L2000,1550 M2080,1050 L2150,1400 M2120,780 C2150,900 2200,960 2232,980 M1260,900 C1230,1000 1240,1060 1290,1080"/>
<path d="M930,1340 C950,1240 1050,1150 1170,1150 C1280,1150 1380,1230 1430,1320 C1450,1400 1450,1500 1440,1604 M930,1340 L960,1604"/>

</g>
<path d="M0,1604 L730,1340 L560,1604" stroke="#111" stroke-width="8"/>
</g>
<!-- BL -->
<g transform="translate(0,641) scale(0.4)">
<g stroke="#a0a0a0" stroke-width="4.2">
<ellipse cx="620" cy="470" rx="250" ry="270"/><ellipse cx="620" cy="480" rx="230" ry="100"/>
<path d="M0,380 L220,0 M750,0 C760,80 820,130 940,100 M900,0 C950,40 1000,60 1050,40"/>
</g>
<g stroke="#141414" stroke-width="6.5">
<path d="M95,0 L400,200 L395,140 L430,210 L480,210 M95,0 L350,360 L310,375 L380,400 M380,280 L410,300"/>
<path d="M380,420 C370,280 460,170 600,165 C760,160 880,270 880,400 C880,480 850,560 830,620"/>
<path d="M380,420 C380,470 390,530 410,580"/>
<path d="M1184,30 L830,200 L780,230 C770,290 800,320 840,310 L820,360 C860,390 920,380 960,340 L1184,350 M1184,80 L930,340 M1184,380 L1050,360"/>
<path d="M555,340 L565,370 L555,400 L545,370 Z"/>
</g>
<g stroke="#1a1a1a" stroke-width="3">
<path d="M400,470 C500,540 600,560 700,540 C780,520 840,470 880,420 M420,490 C480,560 560,570 620,560 C700,550 760,500 800,480"/>
<path d="M470,550 C460,450 480,350 590,170 M640,550 C690,450 700,350 760,180"/>
</g>
</g>
<!-- BL2 -->
<g transform="translate(0,861) scale(0.263)">
<g stroke="#a0a0a0" stroke-width="6">
<path d="M60,660 C300,560 700,480 1200,500 C1500,520 1700,600 1802,650 M80,700 C400,640 900,620 1400,680 M150,780 C500,820 1000,880 1600,800 M300,1190 C600,1150 1000,1170 1400,1240 M200,1300 C400,1250 600,1230 800,1250"/>
<path d="M180,1000 L240,1500 M580,0 C600,150 700,260 800,320 M1250,250 L1300,520 M1600,1200 L1700,1400 M1550,1560 C1600,1500 1700,1400 1802,1300 M20,720 C100,600 160,560 240,560 M560,560 C700,520 900,480 1100,500"/>
</g>
<g stroke="#101010" stroke-width="10">
<path d="M790,330 C900,340 1100,300 1310,230 M790,330 L800,380 M1310,230 C1330,260 1330,300 1320,340 L1280,430"/>
<path d="M740,260 C560,330 400,430 250,580 L0,820"/>
<path d="M290,580 C400,700 470,900 490,1250 L480,1604"/>
<path d="M290,710 C240,900 150,1050 120,1230 C110,1350 200,1450 270,1500 L260,1604" stroke-width="13"/>
<path d="M40,830 C80,870 110,920 135,990 M10,1190 C40,1260 70,1330 100,1350 M250,710 L290,760 L300,710 M290,1360 L480,1255 M290,1360 L310,1604 M130,1470 L150,1604 M0,1240 L20,1604"/>
<path d="M870,350 C860,550 830,800 760,1000 C700,1200 640,1400 630,1604"/>
<path d="M1075,330 C1090,500 1060,700 990,850 C950,920 930,960 920,980 M1240,290 C1260,450 1250,600 1220,730 M1340,390 C1370,470 1360,580 1340,670"/>
<path d="M790,400 C700,460 620,540 560,650 C550,720 600,770 640,900 C660,1000 640,1200 610,1400 L590,1604 M780,400 C760,520 700,640 600,750 M670,450 C600,520 560,600 550,680"/>
<path d="M1320,380 C1400,440 1460,500 1450,580 C1440,640 1380,670 1220,730"/>
<path d="M1330,270 C1500,370 1650,480 1802,640"/>
<path d="M920,980 C1000,900 1150,790 1300,720 C1450,670 1600,660 1802,660"/>
<path d="M840,1604 C850,1400 950,1250 1100,1150 C1300,1000 1500,900 1650,760 C1700,700 1750,670 1802,660" stroke-width="12"/>
<path d="M700,1604 C720,1400 800,1200 920,1000"/>
<path d="M920,1310 L1150,1450 L1030,1604"/>
<path d="M1100,1520 C1200,1560 1300,1590 1400,1580 C1500,1560 1580,1500 1640,1460" stroke-width="18"/>
<path d="M1530,1270 C1540,1350 1560,1420 1600,1470 M1620,1190 C1700,1050 1760,1000 1802,960 M1630,1260 C1630,1300 1640,1360 1650,1390 M1660,1410 C1700,1400 1760,1380 1802,1370 M1600,1470 L1660,1580"/>
<path d="M630,0 C660,80 700,180 740,230 L820,320 M1280,0 C1300,80 1310,160 1310,230 M1180,160 C1120,220 1050,270 980,320"/>
<path d="M1310,210 L1430,0 M1460,330 C1500,250 1560,180 1580,160 L1600,0 M1600,420 L1802,140 M1700,560 L1802,400"/>
</g>
<g stroke="#161616" stroke-width="6">
<path d="M710,200 C760,190 820,180 870,170 L870,90 L900,170 C950,170 1020,160 1060,130 M840,300 L870,220 L900,240 M740,20 L820,320 M1010,40 L1060,260 M700,50 L1080,50"/>
</g>
</g>
<!-- BR -->
<g transform="translate(474,641) scale(0.4)">
<g stroke="#a0a0a0" stroke-width="4.2">
<path d="M1184,820 C1000,840 900,900 800,1000 C700,1100 600,1250 400,1300 C200,1340 50,1350 0,1380"/>
</g>
<g stroke="#141414" stroke-width="4.2">
<path d="M740,1000 C760,1060 760,1100 730,1150 L660,1140 M850,1080 C880,1200 920,1350 950,1400 M830,980 C850,1050 850,1080 830,1100"/>
<path d="M260,920 C240,980 280,1060 330,1100 C400,1130 500,1110 580,1090 L620,1140 L650,1130 C700,1100 720,1040 710,980 M510,880 L590,960 L710,980 M590,960 L580,1090 M260,920 C340,900 420,920 510,880"/>
<path d="M100,1050 L250,1000 M190,1180 C300,1160 500,1140 650,1240 L660,1340 M200,1290 C350,1280 500,1270 630,1330"/>
<path d="M0,960 C60,1000 120,1060 170,1110 C200,1200 210,1300 200,1400 C190,1480 170,1540 140,1604 M0,1190 L40,1200"/>
<path d="M270,1300 C290,1400 300,1500 310,1604 M520,1604 C540,1500 580,1420 620,1350 M640,1340 C650,1450 660,1530 650,1604"/>
<path d="M840,1480 L950,1400 C990,1410 1040,1430 1060,1460 L1184,1604 M850,1500 L870,1604 M640,1140 C700,1250 800,1400 850,1490"/>
<ellipse cx="890" cy="1440" rx="22" ry="55" transform="rotate(40 890 1440)"/>
</g>
</g>
<!-- BR2 -->
<g transform="translate(428,611) scale(0.2494)">
<g stroke="#a0a0a0" stroke-width="6">
<ellipse cx="1180" cy="900" rx="260" ry="380"/>
<path d="M1450,1604 C1600,1500 1800,1470 2085,1440 M1430,540 L1830,330 M1830,100 L1830,540 L1430,830 M120,650 C400,500 700,450 1000,470 M700,560 C680,800 700,1100 760,1300 M60,1200 C150,1100 250,1000 300,900"/>
</g>
<g stroke="#121212" stroke-width="7">
<path d="M600,80 L700,250 L610,390 L700,480 L750,510 M690,250 C720,300 750,350 790,380"/>
<path d="M1180,120 C1190,200 1190,350 1170,430 C1160,520 1130,580 1060,630 L980,670 C900,650 820,620 750,560 L700,490"/>
<path d="M890,200 L1115,200 C1110,280 1080,350 1010,370 C950,370 910,320 890,200 Z M920,230 C940,300 980,340 1020,340 C1060,330 1080,290 1090,230"/>
<ellipse cx="1030" cy="260" rx="38" ry="48"/>
<path d="M700,290 L1170,290 M720,310 L1170,300"/>
<path d="M880,460 L950,490 L950,530 L870,500 Z M970,510 L1050,520 L1040,580 L1000,600 Z M1070,490 L1110,480 L1100,520 L1070,525 Z M1130,430 L1150,420 L1150,460 L1130,465 Z"/>
<path d="M610,380 L720,390 L760,420 L940,310 L830,440 L750,510 M1180,460 L1390,310 L1200,420 M240,360 L620,470"/>
<path d="M680,110 L700,240 L820,180 L760,40 L880,100 L860,0 M1060,0 L1090,100 L1150,80 L1160,180 L1180,120"/>
<path d="M1180,0 C1250,100 1300,300 1460,510 M1220,0 C1300,150 1400,300 1560,430 M1400,0 L1550,330 M1680,0 C1720,100 1800,250 1840,350 M1950,0 L1930,320 M1480,0 C1520,150 1560,300 1560,430"/>
<path d="M650,500 L620,690 M700,500 C720,600 900,800 1010,920 M980,670 L1010,720 C1030,780 1020,850 1010,920"/>
<path d="M0,680 C200,680 400,700 600,760 C800,830 900,880 1020,920 M250,600 C400,590 600,640 800,760 C900,820 980,870 1040,900 M0,770 C200,800 400,830 600,880 C750,940 900,1000 1000,1040 M220,850 C400,840 600,870 800,950 L990,1040 M0,880 C150,890 300,900 500,950 C700,1000 900,1100 1000,1140 M490,690 C600,720 800,800 920,850 M600,800 L920,960 M630,870 L920,1070"/>
<path d="M1040,720 L1100,700 L1130,820 L1190,810 L1200,880 L1260,900 L1350,920 L1400,980 L1390,1000 M1090,820 C1130,900 1120,950 1110,1000 L1180,900"/>
<path d="M1240,1100 C1300,1050 1500,980 1680,920 C1620,1050 1560,1130 1530,1150 C1500,1120 1450,1130 1400,1160 C1350,1160 1280,1130 1240,1100 M1290,1070 C1400,1040 1500,1010 1610,1000"/>
<path d="M980,1220 L1060,1060 L1240,1140 L1260,1220 L1160,1350 L980,1220 Z M1000,1220 L1070,1080 L1230,1150 L1240,1230 L1150,1330 Z"/>
<circle cx="275" cy="1050" r="75"/><circle cx="275" cy="1050" r="35" stroke-width="9"/>
<path d="M210,1110 L0,1380 M260,1380 L150,1604 M0,1460 L150,1604"/>
<path d="M360,1330 C340,1200 360,1050 480,990 C600,960 750,980 900,1030 C960,1060 990,1100 1000,1140 M360,1330 C400,1380 500,1430 700,1500 C800,1530 900,1540 1000,1500 L1150,1390"/>
<path d="M370,1350 C450,1450 600,1510 760,1560 C900,1590 1000,1580 1150,1390"/>
<path d="M1250,1160 C1350,1200 1420,1280 1450,1400 C1470,1500 1480,1560 1500,1604 M1480,1130 C1540,1200 1560,1300 1530,1400 L1500,1420"/>
<path d="M1150,1390 L1250,1604 M1130,1410 L1000,1604 M1140,1200 L1140,1380"/>
</g>
<path d="M0,270 L350,100 L0,440" stroke="#0e0e0e" stroke-width="11"/>
</g>
</g>
</symbol>
</defs></svg>
<svg class="a" style="left:732px;top:289px" width="948" height="1283" viewBox="0 0 948 1283"><use href="#art" x="0" y="0" width="948" height="1283"/></svg>


<!-- brush size panel -->
<svg class="a" style="left:1956px;top:112px" width="432" height="40" viewBox="1956 112 432 40" fill="none" stroke="#7a7a7a" stroke-width="1.3">
<path d="M1966,120 V144 M1970,120 V144 M1974,120 V144"/><path d="M1974.5,124 L1983,132 L1974.5,140" stroke="#8a8a8a" stroke-width="1.5"/>
<path d="M2027,124.4 L2035,132 L2027,139.6 M2036,124.4 L2044,132 L2036,139.6"/>
<path d="M2058,120 V144 M2062.5,120 V144 M2067,120 V144"/>
<path d="M2313,124.4 L2321,132 L2313,139.6"/>
<path d="M2365,124.4 L2373,132 L2365,139.6 M2374,124.4 L2382,132 L2374,139.6"/>
</svg>
<div class="a" style="left:1960px;top:152px;width:88px;height:1516px;background:#383838"></div>
<div class="a" style="left:1960px;top:152px;width:88px;height:44px;background:#363636"></div>
<div class="a" style="left:1960px;top:196px;width:88px;height:10px;background:#474747"></div>
<div class="a" style="left:2006px;top:168px;width:42px;height:28px;background:#4b4b4b"></div>
<svg class="a" style="left:1975px;top:169px" width="16" height="16" viewBox="0 0 16 16" stroke="#8a8a8a" stroke-width="1.5"><path d="M1,1.5 H15 M1,8 H15 M1,14.5 H15"/></svg>
<svg class="a" style="left:2010px;top:172px" width="44" height="32" viewBox="2010 172 44 32" fill="none" stroke="#b8b8b8" stroke-width="2"><path d="M2031,177.5 C2023,176 2017,181 2017,188 C2017,195 2023,200 2031,198.5"/><circle cx="2040" cy="188" r="11.5"/><path d="M2023,188 H2044" stroke-width="3"/><path d="M2027,182 L2020,188 L2027,194 Z M2040,182 L2047,188 L2040,194 Z" fill="#b8b8b8" stroke="none"/></svg>
<div class="a" style="left:1962px;top:207px;width:70px;height:1461px;background:#3c3c3c"></div>
<div class="a" style="left:2032px;top:207px;width:2px;height:1461px;background:#242424"></div>
<div class="a" style="left:2036px;top:210px;width:8px;height:657px;background:#575757;border-radius:4px"></div>
<div class="a" style="left:2048px;top:152px;width:4px;height:1516px;background:#2e2e2e"></div>

<div class="a" style="left:1962px;top:286px;width:70px;height:2px;background:#1e1e1e"></div>
<div class="a" style="left:1997.0px;top:238.5px;width:1px;height:1px;background:#f4f4f4;border-radius:50%"></div>
<div class="t" style="left:1961px;width:72px;text-align:center;top:259px;font-size:23px;color:#e2e2e2">0.7</div>
<div class="a" style="left:1962px;top:366px;width:70px;height:2px;background:#1e1e1e"></div>
<div class="a" style="left:1996.9px;top:318.4px;width:1.2px;height:1.2px;background:#f4f4f4;border-radius:50%"></div>
<div class="t" style="left:1961px;width:72px;text-align:center;top:339px;font-size:23px;color:#e2e2e2">1</div>
<div class="a" style="left:1962px;top:446px;width:70px;height:2px;background:#1e1e1e"></div>
<div class="a" style="left:1996.5px;top:398.0px;width:2px;height:2px;background:#f4f4f4;border-radius:50%"></div>
<div class="t" style="left:1961px;width:72px;text-align:center;top:419px;font-size:23px;color:#e2e2e2">1.5</div>
<div class="a" style="left:1962px;top:526px;width:70px;height:2px;background:#1e1e1e"></div>
<div class="a" style="left:1996.0px;top:477.5px;width:3px;height:3px;background:#f4f4f4;border-radius:50%"></div>
<div class="t" style="left:1961px;width:72px;text-align:center;top:499px;font-size:23px;color:#e2e2e2">2</div>
<div class="a" style="left:1962px;top:606px;width:70px;height:2px;background:#1e1e1e"></div>
<div class="a" style="left:1995.5px;top:557.0px;width:4px;height:4px;background:#f4f4f4;border-radius:50%"></div>
<div class="t" style="left:1961px;width:72px;text-align:center;top:579px;font-size:23px;color:#e2e2e2">2.5</div>
<div class="a" style="left:1962px;top:686px;width:70px;height:2px;background:#1e1e1e"></div>
<div class="a" style="left:1995.0px;top:636.5px;width:5px;height:5px;background:#f4f4f4;border-radius:50%"></div>
<div class="t" style="left:1961px;width:72px;text-align:center;top:659px;font-size:23px;color:#e2e2e2">3</div>
<div class="a" style="left:1962px;top:766px;width:70px;height:2px;background:#1e1e1e"></div>
<div class="a" style="left:1994.0px;top:715.5px;width:7px;height:7px;background:#f4f4f4;border-radius:50%"></div>
<div class="t" style="left:1961px;width:72px;text-align:center;top:739px;font-size:23px;color:#e2e2e2">4</div>
<div class="a" style="left:1962px;top:846px;width:70px;height:2px;background:#1e1e1e"></div>
<div class="a" style="left:1993.0px;top:794.5px;width:9px;height:9px;background:#f4f4f4;border-radius:50%"></div>
<div class="t" style="left:1961px;width:72px;text-align:center;top:819px;font-size:23px;color:#e2e2e2">5</div>
<div class="a" style="left:1962px;top:847px;width:70px;height:80px;background:#5f6a84"></div>
<div class="a" style="left:1980px;top:891px;width:32px;height:31px;background:#4f586c;border-radius:4px"></div>
<div class="a" style="left:1962px;top:926px;width:70px;height:2px;background:#1e1e1e"></div>
<div class="a" style="left:1992.5px;top:874.0px;width:10px;height:10px;background:#f4f4f4;border-radius:50%"></div>
<div class="t" style="left:1961px;width:72px;text-align:center;top:899px;font-size:23px;color:#e2e2e2">6</div>
<div class="a" style="left:1962px;top:1005px;width:70px;height:2px;background:#1e1e1e"></div>
<div class="a" style="left:1991.5px;top:952.0px;width:12px;height:12px;background:#f4f4f4;border-radius:50%"></div>
<div class="t" style="left:1961px;width:72px;text-align:center;top:979px;font-size:23px;color:#e2e2e2">7</div>
<div class="a" style="left:1962px;top:1085px;width:70px;height:2px;background:#1e1e1e"></div>
<div class="a" style="left:1990.0px;top:1030.5px;width:15px;height:15px;background:#f4f4f4;border-radius:50%"></div>
<div class="t" style="left:1961px;width:72px;text-align:center;top:1059px;font-size:23px;color:#e2e2e2">8</div>
<div class="a" style="left:1962px;top:1165px;width:70px;height:2px;background:#1e1e1e"></div>
<div class="a" style="left:1988.0px;top:1108.5px;width:19px;height:19px;background:#f4f4f4;border-radius:50%"></div>
<div class="t" style="left:1961px;width:72px;text-align:center;top:1139px;font-size:23px;color:#e2e2e2">10</div>
<div class="a" style="left:1962px;top:1245px;width:70px;height:2px;background:#1e1e1e"></div>
<svg class="a" style="left:1962px;top:1166px" width="70" height="80" viewBox="0 0 70 80"><defs><clipPath id="cp12"><rect x="0" y="0" width="70" height="43"/></clipPath></defs><circle cx="35.5" cy="32" r="11.75" fill="#9c9c9c"/><circle cx="35.5" cy="32" r="11.75" fill="#fff" clip-path="url(#cp12)"/></svg>
<div class="t" style="left:1961px;width:72px;text-align:center;top:1219px;font-size:23px;color:#e2e2e2">12</div>
<div class="a" style="left:1962px;top:1325px;width:70px;height:2px;background:#1e1e1e"></div>
<svg class="a" style="left:1962px;top:1246px" width="70" height="80" viewBox="0 0 70 80"><defs><clipPath id="cp13"><rect x="0" y="0" width="70" height="43"/></clipPath></defs><circle cx="35.5" cy="32" r="14.0" fill="#9c9c9c"/><circle cx="35.5" cy="32" r="14.0" fill="#fff" clip-path="url(#cp13)"/></svg>
<div class="t" style="left:1961px;width:72px;text-align:center;top:1299px;font-size:23px;color:#e2e2e2">15</div>
<div class="a" style="left:1962px;top:1405px;width:70px;height:2px;background:#1e1e1e"></div>
<svg class="a" style="left:1962px;top:1326px" width="70" height="80" viewBox="0 0 70 80"><defs><clipPath id="cp14"><rect x="0" y="0" width="70" height="43"/></clipPath></defs><circle cx="35.5" cy="32" r="16.0" fill="#9c9c9c"/><circle cx="35.5" cy="32" r="16.0" fill="#fff" clip-path="url(#cp14)"/></svg>
<div class="t" style="left:1961px;width:72px;text-align:center;top:1379px;font-size:23px;color:#e2e2e2">17</div>
<div class="a" style="left:1962px;top:1485px;width:70px;height:2px;background:#1e1e1e"></div>
<svg class="a" style="left:1962px;top:1406px" width="70" height="80" viewBox="0 0 70 80"><defs><clipPath id="cp15"><rect x="0" y="0" width="70" height="43"/></clipPath></defs><circle cx="35.5" cy="32" r="19.25" fill="#9c9c9c"/><circle cx="35.5" cy="32" r="19.25" fill="#fff" clip-path="url(#cp15)"/></svg>
<div class="t" style="left:1961px;width:72px;text-align:center;top:1459px;font-size:23px;color:#e2e2e2">20</div>
<div class="a" style="left:1962px;top:1565px;width:70px;height:2px;background:#1e1e1e"></div>
<svg class="a" style="left:1962px;top:1486px" width="70" height="80" viewBox="0 0 70 80"><defs><clipPath id="cp16"><rect x="0" y="0" width="70" height="43"/></clipPath></defs><circle cx="35.5" cy="32" r="24.5" fill="#9c9c9c"/><circle cx="35.5" cy="32" r="24.5" fill="#fff" clip-path="url(#cp16)"/></svg>
<div class="t" style="left:1961px;width:72px;text-align:center;top:1539px;font-size:23px;color:#e2e2e2">25</div>
<div class="a" style="left:1962px;top:1645px;width:70px;height:2px;background:#1e1e1e"></div>
<svg class="a" style="left:1962px;top:1566px" width="70" height="80" viewBox="0 0 70 80"><defs><clipPath id="cp17"><rect x="0" y="0" width="70" height="43"/></clipPath></defs><circle cx="35.5" cy="32" r="24.5" fill="#9c9c9c"/><circle cx="35.5" cy="32" r="24.5" fill="#fff" clip-path="url(#cp17)"/></svg>
<div class="t" style="left:1961px;width:72px;text-align:center;top:1619px;font-size:23px;color:#e2e2e2">30</div>
<div class="a" style="left:1962px;top:1725px;width:70px;height:2px;background:#1e1e1e"></div>
<svg class="a" style="left:1962px;top:1646px" width="70" height="80" viewBox="0 0 70 80"><defs><clipPath id="cp18"><rect x="0" y="0" width="70" height="43"/></clipPath></defs><circle cx="35.5" cy="32" r="24.5" fill="#9c9c9c"/><circle cx="35.5" cy="32" r="24.5" fill="#fff" clip-path="url(#cp18)"/></svg>

<!-- navigator -->
<div class="a" style="left:2052px;top:152px;width:336px;height:1516px;background:#363636"></div>
<div class="a" style="left:2052px;top:196px;width:334px;height:10px;background:#474747"></div>
<div class="a" style="left:2098px;top:168px;width:150px;height:28px;background:#4b4b4b"></div>
<svg class="a" style="left:2067px;top:169px" width="16" height="16" viewBox="0 0 16 16" stroke="#8a8a8a" stroke-width="1.5"><path d="M1,1.5 H15 M1,8 H15 M1,14.5 H15"/></svg>
<svg class="a" style="left:2111px;top:175px" width="30" height="26" viewBox="0 0 30 26" fill="none" stroke="#b2b2b2" stroke-width="1.8"><path d="M4,7 H2.5 C1.8,7 1,7.8 1,8.5 V23.5 C1,24.2 1.8,25 2.5,25 H22 C22.7,25 23.5,24.2 23.5,23.5 V22"/><rect x="6" y="1.5" width="22.5" height="19" rx="2"/><rect x="9.5" y="5" width="15.5" height="12" fill="#8a8a8a" stroke="none"/></svg>
<div class="t" style="left:2155px;top:178px;font-size:20px;color:#e2e2e2">Navigator</div>
<div class="a" style="left:2052px;top:206px;width:334px;height:310px;background:#2d2d2d"></div>
<div class="a" style="left:2072px;top:208px;width:2.5px;height:308px;background:#f01010"></div>
<div class="a" style="left:2104px;top:208px;width:228px;height:308px;background:#ebebeb;overflow:hidden"><svg width="228" height="308" viewBox="0 0 948 1283" preserveAspectRatio="none"><use href="#art"/></svg></div>

<div class="a" style="left:2052px;top:518px;width:334px;height:102px;background:#4b4b4b"></div>
<div class="t" style="left:2108px;top:534px;font-size:22px;color:#e2e2e2">16.7</div>
<div class="t" style="left:2117px;top:582px;font-size:22px;color:#e2e2e2">0.0</div>
<svg class="a" style="left:2140px;top:520px" width="248" height="100" viewBox="2140 520 248 100" fill="none" stroke="#b4b4b4" stroke-width="2">
<circle cx="2170" cy="548" r="14.5"/><path d="M2161,548 H2179"/>
<circle cx="2216" cy="548" r="14.5"/><path d="M2207,548 H2225 M2216,539 V557"/>
<circle cx="2262" cy="548" r="14.5"/><rect x="2255" y="541" width="14" height="14" rx="2" fill="#b4b4b4" stroke="none"/>
<path d="M2291,531 V567 M2291,579 V615" stroke="#7a7a7a"/>
<path d="M2314,548 H2305 C2304,548 2303,547 2303,546 V537 C2303,536 2304,535 2305,535 H2315 C2316,535 2317,536 2317,537 V546"/>
<path d="M2317,548 H2327 C2328,548 2329,549 2329,550 V559 C2329,560 2328,561 2327,561 H2317 C2316,561 2315,560 2315,559 V550"/>
<path d="M2308,540 L2324,556" stroke-width="2.2"/><path d="M2305,537 H2313 L2305,545 Z M2327,559 H2319 L2327,551 Z" fill="#b4b4b4" stroke="none"/>
<rect x="2351" y="537" width="23" height="22" rx="3"/><path d="M2355,541 L2370,555" stroke-width="2.2"/><path d="M2354,540 H2361 L2354,547 Z M2371,556 H2364 L2371,549 Z" fill="#b4b4b4" stroke="none"/>
<path d="M2163,590 A12,12 0 1 1 2171,607" stroke-width="2"/><path d="M2156,594 H2168 L2162,602 Z" fill="#b4b4b4" stroke="none"/>
<path d="M2223,590 A12,12 0 1 0 2215,607" stroke-width="2"/><path d="M2217,594 H2229 L2223,602 Z" fill="#b4b4b4" stroke="none"/>
<path d="M2262,583 A13,13 0 1 1 2249.5,592" stroke-width="2"/><path d="M2262,583 V596" stroke-width="2"/><circle cx="2262" cy="596" r="3.5" fill="#b4b4b4" stroke="none"/>
<circle cx="2251" cy="591" r="1" fill="#b4b4b4" stroke="none"/><circle cx="2253" cy="587" r="1" fill="#b4b4b4" stroke="none"/><circle cx="2256" cy="584.5" r="1" fill="#b4b4b4" stroke="none"/>
<path d="M2302,588 L2313,596 L2302,604 Z" stroke-width="2"/><path d="M2331,588 L2320,596 L2331,604 Z" fill="#b4b4b4" stroke="none"/><path d="M2316,584 V609"/>
<path d="M2351,581 H2371 L2361,592 Z" fill="#b4b4b4" stroke="none"/><path d="M2348.5,596 H2375.5" stroke-width="2"/><path d="M2352,610 H2370 L2361,601 Z" stroke-width="2"/>
</svg>
<div class="a" style="left:2052px;top:620px;width:336px;height:3px;background:#2e2e2e"></div>

<!-- color wheel -->
<div class="a" style="left:2052px;top:666px;width:334px;height:310px;background:#4b4b4b"></div>
<div class="a" style="left:2098px;top:638px;width:174px;height:28px;background:#4b4b4b"></div>
<svg class="a" style="left:2067px;top:641px" width="16" height="16" viewBox="0 0 16 16" stroke="#8a8a8a" stroke-width="1.5"><path d="M1,1.5 H15 M1,8 H15 M1,14.5 H15"/></svg>
<svg class="a" style="left:2111px;top:643px" width="30" height="30" viewBox="0 0 30 30" fill="none" stroke="#b2b2b2" stroke-width="1.8"><circle cx="15" cy="14.5" r="12.5"/><rect x="9" y="8.5" width="12" height="12" rx="3" fill="#b2b2b2" stroke="none"/></svg>
<div class="t" style="left:2154px;top:648px;font-size:20px;color:#e2e2e2">Color Wheel</div>
<div class="a" style="left:2088px;top:678px;width:261px;height:261px;border-radius:50%;background:conic-gradient(from -60deg,#ea1414,#eee014,#1ee614,#14e6d8,#1414ea,#ea14e0,#ea1414);border:1px solid #333"></div>
<div class="a" style="left:2109px;top:699px;width:219px;height:219px;border-radius:50%;background:#4b4b4b;border:1px solid #333"></div>
<div class="a" style="left:2151px;top:741px;width:136px;height:135px;background:linear-gradient(to top,#000,rgba(0,0,0,0)),linear-gradient(to right,#fff,#ff0040)"></div>
<div class="a" style="left:2143px;top:868px;width:17px;height:17px;border-radius:50%;border:2.5px solid #fff;box-shadow:0 0 0 1.5px #222"></div>
<div class="a" style="left:2092px;top:769.5px;width:22px;height:17px;background:#e8104a;border:3.5px solid #fff;box-shadow:0 0 0 2px #111;transform:rotate(14deg)"></div>
<div class="a" style="left:2073px;top:906px;width:39px;height:39px;border:2px solid #6a6a6a;border-radius:6px"></div>
<div class="a" style="left:2079px;top:913px;width:26px;height:26px;background:#000;border-radius:2px"></div>
<div class="a" style="left:2052px;top:890px;width:40px;height:40px;background:#000;border:5px solid #7d8fc0;border-radius:7px;box-shadow:inset 0 0 0 1px #555"></div>
<div class="a" style="left:2052px;top:948px;width:60px;height:22px;border:1.5px solid #747474;border-radius:8px"></div>
<div class="a" style="left:2059px;top:955px;width:46px;height:9px;border-radius:4.5px;background-color:#fff;background-image:linear-gradient(90deg,#999 50%,transparent 50%),linear-gradient(90deg,transparent 50%,#999 50%);background-size:12px 4.5px;background-position:0 0,0 4.5px;background-repeat:repeat-x"></div>
<div class="a" style="left:2124px;top:948px;width:16px;height:15px;background:#a8a8a8;border-radius:2px"></div>
<div class="t" style="left:2127px;top:949px;font-size:14px;font-weight:bold;color:#4b4b4b">H</div>
<div class="t" style="left:2144px;top:945px;font-size:22.5px;color:#e2e2e2">345</div>
<div class="a" style="left:2188px;top:948px;width:16px;height:15px;background:#a8a8a8;border-radius:2px"></div>
<div class="t" style="left:2191px;top:949px;font-size:14px;font-weight:bold;color:#4b4b4b">S</div>
<div class="t" style="left:2227px;top:945px;font-size:21.5px;color:#e2e2e2">0</div>
<div class="a" style="left:2251px;top:948px;width:17px;height:15px;background:#a8a8a8;border-radius:2px"></div>
<div class="t" style="left:2254px;top:949px;font-size:14px;font-weight:bold;color:#4b4b4b">V</div>
<div class="t" style="left:2290px;top:945px;font-size:21.5px;color:#e2e2e2">0</div>
<svg class="a" style="left:2336px;top:930px" width="32" height="32" viewBox="0 0 32 32" fill="none" stroke="#b2b2b2" stroke-width="2"><circle cx="16" cy="16" r="14"/><path d="M12,9 L23,16 L12,23 Z"/></svg>

<!-- color slider -->
<div class="a" style="left:2052px;top:1022px;width:334px;height:310px;background:#4b4b4b"></div>
<div class="a" style="left:2098px;top:993px;width:168px;height:29px;background:#4b4b4b"></div>
<svg class="a" style="left:2067px;top:994px" width="16" height="16" viewBox="0 0 16 16" stroke="#8a8a8a" stroke-width="1.5"><path d="M1,1.5 H15 M1,8 H15 M1,14.5 H15"/></svg>
<svg class="a" style="left:2111px;top:999px" width="30" height="28" viewBox="0 0 30 28" fill="#b2b2b2" stroke="none"><rect x="1" y="1" width="27" height="3" rx="1"/><rect x="1" y="12" width="27" height="3" rx="1"/><rect x="1" y="23" width="27" height="3" rx="1"/><path d="M4,6 L8,6 L6,9 Z M12,17 L16,17 L14,20 Z M7,20 H11 L9,17 Z"/><rect x="1" y="7" width="27" height="1.5" fill="#7a7a7a"/><rect x="1" y="18" width="27" height="1.5" fill="#7a7a7a"/></svg>
<div class="t" style="left:2154px;top:1003px;font-size:19.5px;color:#e2e2e2">Color Slider</div>
<div class="a" style="left:2088px;top:1037px;width:292px;height:126px;border:2px solid #3c3c3c;border-right:none;background:#4b4b4b"></div>
<div class="a" style="left:2088px;top:1169px;width:292px;height:163px;border:2px solid #3c3c3c;border-right:none;border-bottom:none"></div>
<div class="a" style="left:2058px;top:1040px;width:32px;height:67px;background:#4b4b4b;border:2px solid #3c3c3c;border-right:none;border-radius:4px 0 0 4px"></div>
<div class="a" style="left:2058px;top:1173px;width:32px;height:82px;background:#4b4b4b;border:2px solid #3c3c3c;border-right:none;border-radius:4px 0 0 4px"></div>
<div class="a" style="left:2058px;top:1259px;width:30px;height:64px;background:#454545;border:2px solid #3c3c3c;border-right:none;border-radius:4px 0 0 4px"></div>
<div class="t" style="left:2073px;top:1074px;font-size:19px;color:#d8d8d8;transform:translate(-50%,-50%) rotate(-90deg);transform-origin:center">RGB</div>
<div class="t" style="left:2073px;top:1214px;font-size:19px;color:#d8d8d8;transform:translate(-50%,-50%) rotate(-90deg);transform-origin:center">CMYK</div>
<div class="t" style="left:2073px;top:1291px;font-size:19px;color:#8a8a8a;transform:translate(-50%,-50%) rotate(-90deg);transform-origin:center">HSV</div>

<div class="t" style="left:2092px;top:1051px;font-size:20px;color:#e2e2e2">R</div>
<div class="a" style="left:2126px;top:1050px;width:148px;height:19px;background:linear-gradient(to right,#000,#ff0000);border:1px solid #9a9a9a"></div>
<svg class="a" style="left:2117px;top:1070px" width="18" height="10" viewBox="0 0 18 10" fill="none" stroke="#a8a8a8" stroke-width="1.6"><path d="M1,9 L9,1 L17,9"/></svg>
<div class="t" style="left:2314px;top:1051px;font-size:21px;color:#e2e2e2">0</div>
<svg class="a" style="left:2355px;top:1046px" width="18" height="27" viewBox="0 0 18 27" fill="none" stroke="#a8a8a8" stroke-width="1.6"><path d="M2,8 L9,1.5 L16,8 M2,19 L9,25.5 L16,19"/></svg>
<div class="t" style="left:2092px;top:1091px;font-size:20px;color:#e2e2e2">G</div>
<div class="a" style="left:2126px;top:1090px;width:148px;height:19px;background:linear-gradient(to right,#000,#00ff00);border:1px solid #9a9a9a"></div>
<svg class="a" style="left:2117px;top:1110px" width="18" height="10" viewBox="0 0 18 10" fill="none" stroke="#a8a8a8" stroke-width="1.6"><path d="M1,9 L9,1 L17,9"/></svg>
<div class="t" style="left:2314px;top:1091px;font-size:21px;color:#e2e2e2">0</div>
<svg class="a" style="left:2355px;top:1086px" width="18" height="27" viewBox="0 0 18 27" fill="none" stroke="#a8a8a8" stroke-width="1.6"><path d="M2,8 L9,1.5 L16,8 M2,19 L9,25.5 L16,19"/></svg>
<div class="t" style="left:2092px;top:1131px;font-size:20px;color:#e2e2e2">B</div>
<div class="a" style="left:2126px;top:1130px;width:148px;height:19px;background:linear-gradient(to right,#000,#0000ff);border:1px solid #9a9a9a"></div>
<svg class="a" style="left:2117px;top:1150px" width="18" height="10" viewBox="0 0 18 10" fill="none" stroke="#a8a8a8" stroke-width="1.6"><path d="M1,9 L9,1 L17,9"/></svg>
<div class="t" style="left:2314px;top:1131px;font-size:21px;color:#e2e2e2">0</div>
<svg class="a" style="left:2355px;top:1126px" width="18" height="27" viewBox="0 0 18 27" fill="none" stroke="#a8a8a8" stroke-width="1.6"><path d="M2,8 L9,1.5 L16,8 M2,19 L9,25.5 L16,19"/></svg>
<div class="t" style="left:2092px;top:1183px;font-size:20px;color:#e2e2e2">C</div>
<div class="a" style="left:2126px;top:1182px;width:150px;height:19px;background:linear-gradient(to right,#680000,#000);border:1px solid #9a9a9a"></div>
<svg class="a" style="left:2255px;top:1202px" width="18" height="10" viewBox="0 0 18 10" fill="none" stroke="#a8a8a8" stroke-width="1.6"><path d="M1,9 L9,1 L17,9"/></svg>
<div class="t" style="left:2302px;top:1182px;font-size:22px;color:#e2e2e2">92%</div>
<svg class="a" style="left:2355px;top:1178px" width="18" height="27" viewBox="0 0 18 27" fill="none" stroke="#a8a8a8" stroke-width="1.6"><path d="M2,8 L9,1.5 L16,8 M2,19 L9,25.5 L16,19"/></svg>
<div class="t" style="left:2092px;top:1223px;font-size:20px;color:#e2e2e2">M</div>
<div class="a" style="left:2126px;top:1222px;width:150px;height:19px;background:linear-gradient(to right,#003800,#000);border:1px solid #9a9a9a"></div>
<svg class="a" style="left:2249px;top:1242px" width="18" height="10" viewBox="0 0 18 10" fill="none" stroke="#a8a8a8" stroke-width="1.6"><path d="M1,9 L9,1 L17,9"/></svg>
<div class="t" style="left:2302px;top:1222px;font-size:22px;color:#e2e2e2">88%</div>
<svg class="a" style="left:2355px;top:1218px" width="18" height="27" viewBox="0 0 18 27" fill="none" stroke="#a8a8a8" stroke-width="1.6"><path d="M2,8 L9,1.5 L16,8 M2,19 L9,25.5 L16,19"/></svg>
<div class="t" style="left:2092px;top:1263px;font-size:20px;color:#e2e2e2">Y</div>
<div class="a" style="left:2126px;top:1262px;width:150px;height:19px;background:linear-gradient(to right,#000048,#000);border:1px solid #9a9a9a"></div>
<svg class="a" style="left:2249px;top:1282px" width="18" height="10" viewBox="0 0 18 10" fill="none" stroke="#a8a8a8" stroke-width="1.6"><path d="M1,9 L9,1 L17,9"/></svg>
<div class="t" style="left:2302px;top:1262px;font-size:22px;color:#e2e2e2">89%</div>
<svg class="a" style="left:2355px;top:1258px" width="18" height="27" viewBox="0 0 18 27" fill="none" stroke="#a8a8a8" stroke-width="1.6"><path d="M2,8 L9,1.5 L16,8 M2,19 L9,25.5 L16,19"/></svg>
<div class="t" style="left:2092px;top:1303px;font-size:20px;color:#e2e2e2">K</div>
<div class="a" style="left:2126px;top:1302px;width:150px;height:19px;background:linear-gradient(to right,#2e3a3a,#000);border:1px solid #9a9a9a"></div>
<svg class="a" style="left:2237px;top:1322px" width="18" height="10" viewBox="0 0 18 10" fill="none" stroke="#a8a8a8" stroke-width="1.6"><path d="M1,9 L9,1 L17,9"/></svg>
<div class="t" style="left:2302px;top:1302px;font-size:22px;color:#e2e2e2">80%</div>
<svg class="a" style="left:2355px;top:1298px" width="18" height="27" viewBox="0 0 18 27" fill="none" stroke="#a8a8a8" stroke-width="1.6"><path d="M2,8 L9,1.5 L16,8 M2,19 L9,25.5 L16,19"/></svg>

<div class="a" style="left:2338px;top:1137px;width:102px;height:102px;border-radius:50%;border:4px solid #d0d0d0;background:rgba(110,110,110,0.8)"></div>
<svg class="a" style="left:2350px;top:1155px" width="38" height="66" viewBox="0 0 38 66" fill="none" stroke="#d8d8d8" stroke-width="4"><path d="M16,19 L4,32 L16,45"/><path d="M38,3 H30 C28,3 27,4 27,6 V60 C27,62 28,63 30,63 H38" fill="#8c8c8c"/></svg>

<!-- color set -->
<div class="a" style="left:2052px;top:1332px;width:336px;height:3px;background:#2e2e2e"></div>
<div class="a" style="left:2052px;top:1379px;width:334px;height:289px;background:#4b4b4b"></div>
<div class="a" style="left:2098px;top:1350px;width:148px;height:29px;background:#4b4b4b"></div>
<svg class="a" style="left:2067px;top:1352px" width="16" height="16" viewBox="0 0 16 16" stroke="#8a8a8a" stroke-width="1.5"><path d="M1,1.5 H15 M1,8 H15 M1,14.5 H15"/></svg>
<svg class="a" style="left:2111px;top:1356px" width="30" height="29" viewBox="0 0 30 29"><rect x="1" y="1" width="28" height="27" rx="4" fill="#b2b2b2"/><rect x="5" y="5" width="6" height="6" fill="#8a8a8a"/><rect x="12" y="5" width="6" height="6" fill="#6a6a6a"/><rect x="19" y="5" width="6" height="6" fill="#9a9a9a"/><rect x="5" y="12" width="6" height="6" fill="#6a6a6a"/><rect x="12" y="12" width="6" height="6" fill="#4b4b4b"/><rect x="19" y="12" width="6" height="6" fill="#8a8a8a"/><rect x="5" y="19" width="6" height="6" fill="#9a9a9a"/><rect x="12" y="19" width="6" height="6" fill="#8a8a8a"/><rect x="19" y="19" width="6" height="6" fill="#6a6a6a"/></svg>
<div class="t" style="left:2154px;top:1361px;font-size:19.5px;color:#e2e2e2">Color Set</div>
<div class="a" style="left:2052px;top:1389px;width:221px;height:46px;background:#626262;border:1.5px solid #7e7e7e;border-radius:5px"></div>
<div class="t" style="left:2071px;top:1403px;font-size:21.3px;color:#e2e2e2">Default color set</div>
<svg class="a" style="left:2247px;top:1394px" width="20" height="36" viewBox="0 0 20 36" fill="none" stroke="#b8b8b8" stroke-width="1.8"><path d="M2,11 L10,3 L18,11 M2,25 L10,33 L18,25"/></svg>
<svg class="a" style="left:2286px;top:1399px" width="32" height="30" viewBox="0 0 32 30" fill="none" stroke="#b2b2b2" stroke-width="2.2" stroke-linejoin="round"><path d="M2,8 C1,3 5,0.5 9,1.5 L11.5,2.5 L8.5,6.5 L10,9.5 L13.5,10 L16,6.5 C17.5,10 16.5,14 13.5,15.5 L28,25 C29.5,26 29.5,28 28,29 C27,29.5 25.5,29.5 24.5,28.5 L11.5,17 C6.5,17.5 3,13 2,8 Z"/></svg>
<svg class="a" style="left:2343px;top:1398px" width="30" height="30" viewBox="0 0 30 30" fill="none" stroke="#b2b2b2" stroke-width="2"><path d="M9,7 H4 C3,7 2,8 2,9 V26 C2,27 3,28 4,28 H26 C27,28 28,27 28,26 V9 C28,8 27,7 26,7 H21"/><path d="M15,2 V19 M9,13 L15,19 L21,13" stroke-width="2.4"/></svg>
<div class="a" style="left:2053px;top:1437px;width:321px;height:181px;background:#7c7c7c;overflow:hidden"></div>

<div class="a" style="left:2055px;top:1439px;width:37.6px;height:35.8px;background:#000000"></div>
<div class="a" style="left:2095px;top:1439px;width:37.6px;height:35.8px;background:#ffffff"></div>
<div class="a" style="left:2134px;top:1439px;width:37.6px;height:35.8px;background:#ff2b5c"></div>
<div class="a" style="left:2174px;top:1439px;width:37.6px;height:35.8px;background:#ff5a4e"></div>
<div class="a" style="left:2213px;top:1439px;width:37.6px;height:35.8px;background:#ff8048"></div>
<div class="a" style="left:2253px;top:1439px;width:37.6px;height:35.8px;background:#c47822"></div>
<div class="a" style="left:2293px;top:1439px;width:37.6px;height:35.8px;background:#ffc23c"></div>
<div class="a" style="left:2332px;top:1439px;width:37.6px;height:35.8px;background:#fff7c6"></div>
<div class="a" style="left:2055px;top:1477px;width:37.6px;height:35.8px;background:#ffff30"></div>
<div class="a" style="left:2095px;top:1477px;width:37.6px;height:35.8px;background:#ccff7c"></div>
<div class="a" style="left:2134px;top:1477px;width:37.6px;height:35.8px;background:#88e068"></div>
<div class="a" style="left:2174px;top:1477px;width:37.6px;height:35.8px;background:#2e9e28"></div>
<div class="a" style="left:2213px;top:1477px;width:37.6px;height:35.8px;background:#206838"></div>
<div class="a" style="left:2253px;top:1477px;width:37.6px;height:35.8px;background:#38a888"></div>
<div class="a" style="left:2293px;top:1477px;width:37.6px;height:35.8px;background:#28e0d8"></div>
<div class="a" style="left:2332px;top:1477px;width:37.6px;height:35.8px;background:#92f8ff"></div>
<div class="a" style="left:2055px;top:1515px;width:37.6px;height:35.8px;background:#c2ecfc"></div>
<div class="a" style="left:2095px;top:1515px;width:37.6px;height:35.8px;background:#80ccff"></div>
<div class="a" style="left:2134px;top:1515px;width:37.6px;height:35.8px;background:#3898e8"></div>
<div class="a" style="left:2174px;top:1515px;width:37.6px;height:35.8px;background:#3070d8"></div>
<div class="a" style="left:2213px;top:1515px;width:37.6px;height:35.8px;background:#1a40d8"></div>
<div class="a" style="left:2253px;top:1515px;width:37.6px;height:35.8px;background:#5a5af8"></div>
<div class="a" style="left:2293px;top:1515px;width:37.6px;height:35.8px;background:#5a42d0"></div>
<div class="a" style="left:2332px;top:1515px;width:37.6px;height:35.8px;background:#b888f8"></div>
<div class="a" style="left:2055px;top:1552px;width:37.6px;height:35.8px;background:#9030d0"></div>
<div class="a" style="left:2095px;top:1552px;width:37.6px;height:35.8px;background:#f090f8"></div>
<div class="a" style="left:2134px;top:1552px;width:37.6px;height:35.8px;background:#ffc0f8"></div>
<div class="a" style="left:2174px;top:1552px;width:37.6px;height:35.8px;background:#ff58c0"></div>
<div class="a" style="left:2213px;top:1552px;width:37.6px;height:35.8px;background:#a83868"></div>
<div class="a" style="left:2253px;top:1552px;width:37.6px;height:35.8px;background:#a87870"></div>
<div class="a" style="left:2293px;top:1552px;width:37.6px;height:35.8px;background:#704838"></div>
<div class="a" style="left:2332px;top:1552px;width:37.6px;height:35.8px;background:#483020"></div>
<div class="a" style="left:2055px;top:1590px;width:37.6px;height:26px;background:#d08060"></div>
<div class="a" style="left:2095px;top:1590px;width:37.6px;height:26px;background:#f0b090"></div>
<div class="a" style="left:2134px;top:1590px;width:37.6px;height:26px;background:#ffc8c0"></div>
<div class="a" style="left:2174px;top:1590px;width:37.6px;height:26px;background:#ffe2d8"></div>
<div class="a" style="left:2213px;top:1590px;width:37.6px;height:26px;background:#fff0e0"></div>
<div class="a" style="left:2253px;top:1590px;width:37.6px;height:26px;background:#ffd8b0"></div>
<div class="a" style="left:2293px;top:1590px;width:37.6px;height:26px;background:#f0b080"></div>
<div class="a" style="left:2332px;top:1590px;width:37.6px;height:26px;background:#e09858"></div>
<div class="a" style="left:2054px;top:1616px;width:332px;height:47px;background:#4b4b4b"></div>
<div class="a" style="left:2376px;top:1441px;width:6px;height:132px;background:#5c5c5c;border-radius:3px"></div>
<div class="a" style="left:2056px;top:1643px;width:13px;height:15px;background:#c00000;border:1px solid #222"></div>
<div class="a" style="left:2119px;top:1643px;width:13px;height:15px;background:#00b000;border:1px solid #222"></div>
<div class="a" style="left:2184px;top:1643px;width:13px;height:15px;background:#0000d0;border:1px solid #222"></div>
<svg class="a" style="left:2232px;top:1624px" width="160" height="40" viewBox="2232 1628 160 40" fill="none" stroke="#707070" stroke-width="2">
<path d="M2240,1640 H2237 C2236,1640 2235,1641 2235,1642 V1664 C2235,1665 2236,1666 2237,1666 H2257 C2258,1666 2259,1665 2259,1664 V1652"/><path d="M2248,1633 H2256 L2260,1637 V1650 M2247,1643 V1655 M2241,1650 L2247,1656 L2253,1650"/>
<path d="M2303,1633 C2299,1640 2291,1647 2291,1654 C2291,1661 2296,1665 2302,1665 C2304,1665 2305,1665 2306,1664 M2303,1633 C2306,1638 2311,1643 2313,1650" stroke="#b2b2b2"/><circle cx="2311" cy="1660" r="7" fill="#b2b2b2" stroke="#4b4b4b" stroke-width="1.5"/><path d="M2311,1655.5 V1664.5 M2306.5,1660 H2315.5" stroke="#4b4b4b"/>
<path d="M2345,1640 H2373 M2352,1640 V1636 H2366 V1640 M2347,1640 L2349,1667 H2369 L2371,1640 M2354,1645 V1662 M2359,1645 V1662 M2364,1645 V1662" stroke="#666"/>
</svg>
<div class="a" style="left:0;top:1663px;width:2388px;height:5px;background:#2a2a2a"></div>
<div class="a" style="left:2386px;top:152px;width:2px;height:1516px;background:#2e2e2e"></div>

<!-- floating rotate button -->
<div class="a" style="left:24px;top:1468px;width:100px;height:100px;border-radius:50%;background:rgba(62,62,62,0.85)"></div>
<svg class="a" style="left:22px;top:1466px" width="104" height="104" viewBox="0 0 104 104" fill="none" stroke="#cdcdcd">
<circle cx="52" cy="52" r="49.5" stroke-width="2.2"/>
<path d="M27.5,42 V35 C27.5,27 33.5,21.5 41.5,21.5 H62.5 C70.5,21.5 76.5,27 76.5,35 V41.5" stroke-width="3.2" stroke-linecap="round"/>
<path d="M27.5,61 V68 C27.5,76 33.5,81.5 41.5,81.5 H62.5 C70.5,81.5 76.5,76 76.5,68 V64" stroke-width="3.2" stroke-linecap="round"/>
<path d="M20,40 H37.5 L28.7,51.7 Z" fill="#cdcdcd" stroke="none"/>
<path d="M67,64 H84.5 L75.7,52.5 Z" fill="#cdcdcd" stroke="none"/>
<rect x="41" y="34" width="23" height="36.5" rx="3.5" stroke-width="3"/>
<path d="M41,35 H63 V37 L43,68 H41 Z" fill="#cdcdcd" stroke="none"/>
</svg>

</div>
</body></html>
